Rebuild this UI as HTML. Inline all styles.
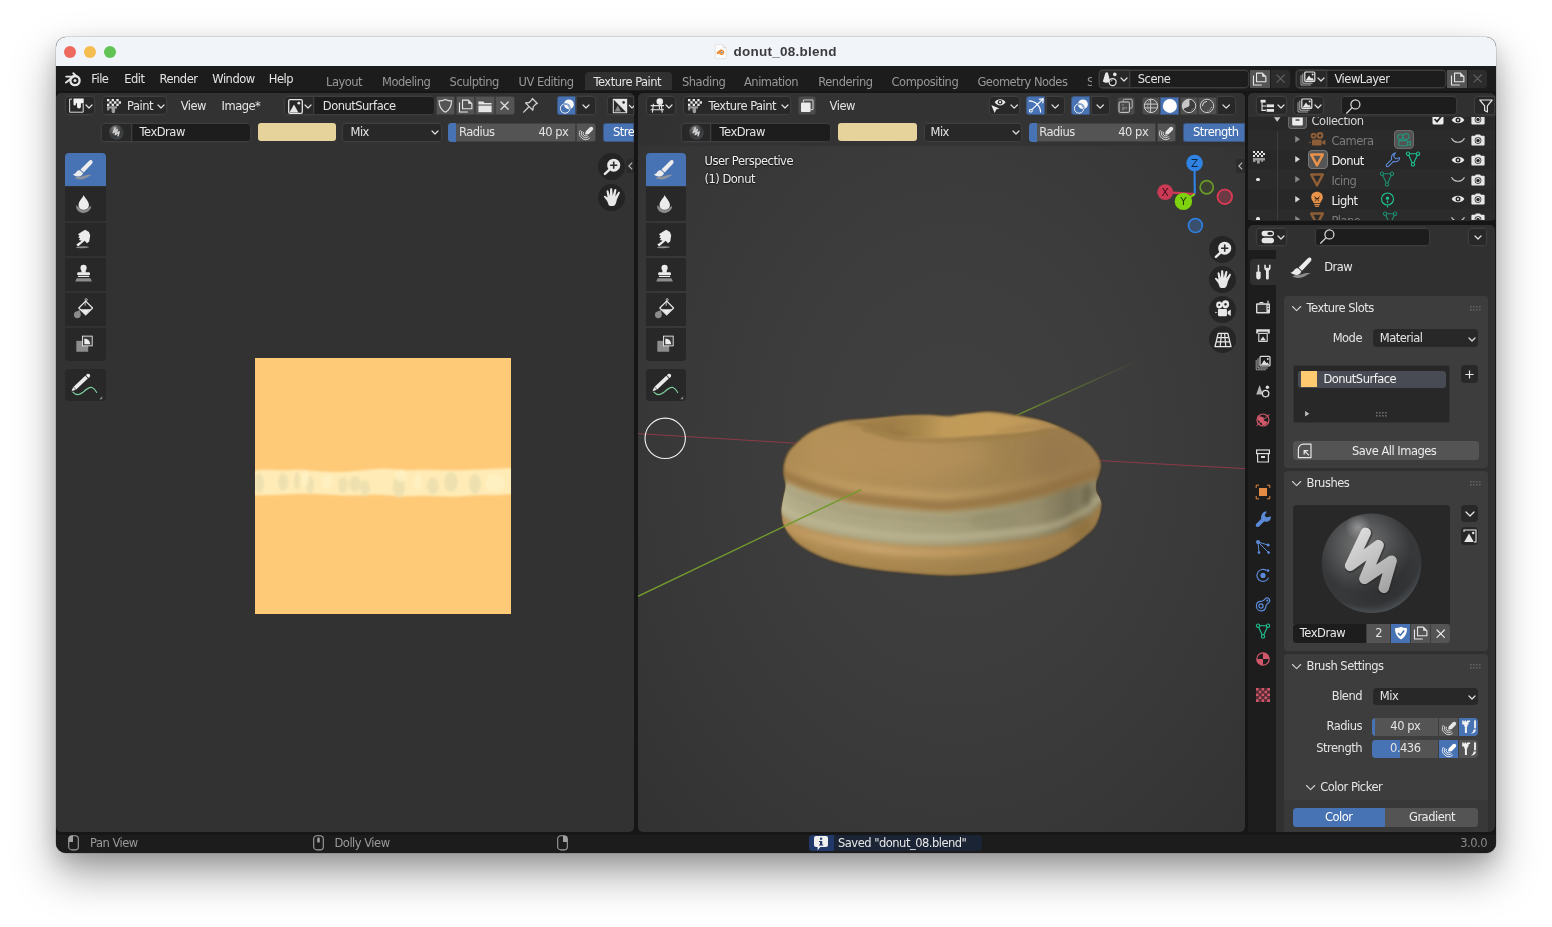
<!DOCTYPE html>
<html lang="en"><head><meta charset="utf-8"><title>donut_08.blend</title>
<style>
*{box-sizing:border-box;margin:0;padding:0}
html,body{width:1552px;height:927px;overflow:hidden;background:#fff}
body{font-family:"DejaVu Sans","Liberation Sans",sans-serif;font-size:11.5px;letter-spacing:-.5px;color:#e4e4e4;position:relative;-webkit-font-smoothing:antialiased}
#win{position:absolute;left:56px;top:37px;width:1440px;height:816px;border-radius:10px;overflow:hidden;background:#161616;
 box-shadow:0 0 0 0.5px rgba(0,0,0,.2),0 21px 44px rgba(0,0,0,.36),0 8px 20px rgba(0,0,0,.13)}
#o{position:absolute;left:-56px;top:-37px;width:1552px;height:927px;will-change:transform}
.a{position:absolute}
.t{position:absolute;white-space:nowrap;line-height:14px;height:14px}
.dim{color:#989898}
.ed{position:absolute;border-radius:5px;overflow:hidden}
.btn{position:absolute;border-radius:3.5px;background:#545454}
.menu{position:absolute;border-radius:4px;background:#282828;box-shadow:inset 0 0 0 .9px #3f3f3f,0 0 0 .4px #3a3a3a}
.fld{position:absolute;border-radius:4px;background:#1d1d1d;box-shadow:inset 0 0 0 .9px #3d3d3d,0 0 0 .4px #393939}
.pm{box-shadow:none}
.blue{background:#4772b3}
.ho{box-shadow:inset 0 0 0 .8px #3b3b3b}
.blue.ho{box-shadow:inset 0 0 0 .8px #3d4f70}
svg{position:absolute;overflow:visible}
.pnl{position:absolute;left:1284px;width:204px;background:#3d3d3d;border-radius:4px}
</style></head>
<body>
<div id="win"><div id="o">
<div class="a" style="left:56px;top:37px;width:1440px;height:29px;background:#f1f4f8;border-bottom:0"></div>
<div class="a" style="left:64px;top:46px;width:12px;height:12px;background:#ee6a5f;border-radius:50%"></div>
<div class="a" style="left:84px;top:46px;width:12px;height:12px;background:#f5bd4f;border-radius:50%"></div>
<div class="a" style="left:104px;top:46px;width:12px;height:12px;background:#61c454;border-radius:50%"></div>
<svg style="left:715px;top:44px;" width="12" height="15" viewBox="0 0 12 15">
      <path d="M0.8 0.5 H8 L11.2 3.7 V14 a.6 .6 0 0 1 -.6 .6 H0.8 a.6 .6 0 0 1 -.6 -.6 V1.1 a.6 .6 0 0 1 .6 -.6z" fill="#fbfbfb" stroke="#d8d8d8" stroke-width=".6"/>
      <path d="M8 0.5 V3.7 H11.2" fill="#e9e9e9" stroke="#d0d0d0" stroke-width=".5"/>
      <circle cx="6.6" cy="8.3" r="2.6" fill="#ea8a2e"/><circle cx="6.8" cy="8.3" r="1.15" fill="#fff"/><circle cx="6.8" cy="8.3" r=".7" fill="#2c5ea8"/>
      <path d="M1.6 8.2 L6 5.2 L7 6 L3.4 8.6 L5 8.8 L2.2 10.6z" fill="#ea8a2e"/></svg>
<div class="t" style="left:733.5px;top:43.7px;height:16px;line-height:16px;font:bold 13.5px 'Liberation Sans',sans-serif;letter-spacing:.25px;color:#3c3c40">donut_08.blend</div>
<div class="a" style="left:56px;top:66px;width:1440px;height:25px;background:#1c1c1c"></div>
<svg style="left:65px;top:71.5px;" width="17" height="15" viewBox="0 0 17 15">
      <circle cx="10" cy="8.6" r="4.6" fill="none" stroke="#e6e6e6" stroke-width="2.3"/>
      <circle cx="10" cy="8.6" r="1.5" fill="#e6e6e6"/>
      <path d="M8.3 1.2 L11.6 4.4 M1.2 4.6 H9 M1 10.6 L7.4 5.4" fill="none" stroke="#e6e6e6" stroke-width="1.9" stroke-linecap="round"/></svg>
<div class="t " style="left:91.2px;top:71.7px;">File</div>
<div class="t " style="left:124.3px;top:71.7px;">Edit</div>
<div class="t " style="left:159.5px;top:71.7px;">Render</div>
<div class="t " style="left:212.3px;top:71.7px;">Window</div>
<div class="t " style="left:268.8px;top:71.7px;">Help</div>
<div class="a" style="left:584.5px;top:72px;width:87.0px;height:18px;background:#303030;border-radius:4px 4px 0 0"></div>
<div class="t dim" style="left:326px;top:74.6px;">Layout</div>
<div class="t dim" style="left:382.1px;top:74.6px;">Modeling</div>
<div class="t dim" style="left:449.6px;top:74.6px;">Sculpting</div>
<div class="t dim" style="left:518.5px;top:74.6px;">UV Editing</div>
<div class="t " style="left:593.4px;top:74.6px;">Texture Paint</div>
<div class="t dim" style="left:682px;top:74.6px;">Shading</div>
<div class="t dim" style="left:744px;top:74.6px;">Animation</div>
<div class="t dim" style="left:818.3px;top:74.6px;">Rendering</div>
<div class="t dim" style="left:891.6px;top:74.6px;">Compositing</div>
<div class="t dim" style="left:977.4px;top:74.6px;">Geometry Nodes</div>
<div class="a" style="left:1087px;top:70px;width:4.5px;height:22px;overflow:hidden"><div class="t dim" style="left:0;top:4.6px">Scripting</div></div>
<div class="fld" style="left:1098.5px;top:69.5px;width:150.0px;height:18.5px;"></div>
<div class="menu" style="left:1098.5px;top:69.5px;width:31.5px;height:18.5px;border-radius:3.5px 0 0 3.5px"></div>
<svg style="left:1102.4px;top:70.6px;" width="17" height="17" viewBox="0 0 17 17">
      <path d="M4.4 1.4 C5.4 1.2 5.8 1.8 6.2 2.8 L8.2 10.6 C6.6 12.2 2.8 12 .8 10.4 L3.2 2.6 C3.4 1.8 3.8 1.5 4.4 1.4z" fill="#e6e6e6"/>
      <circle cx="10.6" cy="11" r="3.5" fill="#1b1b1b" stroke="#e6e6e6" stroke-width="1.25"/>
      <path d="M8.8 10.6 A2 2 0 0 1 10.6 9" fill="none" stroke="#e6e6e6" stroke-width=".8"/>
      <circle cx="12.8" cy="3.4" r="1.8" fill="#e6e6e6"/></svg>
<svg style="left:1120.5px;top:78.0px;" width="6" height="3.0" viewBox="0 0 6 3.0"><path d="M0 0 L3.0 3.0 L6 0" fill="none" stroke="#e0e0e0" stroke-width="1.2" stroke-linecap="round" stroke-linejoin="round"/></svg>
<div class="t " style="left:1137.8px;top:71.9px;">Scene</div>
<div class="btn" style="left:1249.5px;top:69.5px;width:20.5px;height:18.5px;border-radius:0"></div>
<div class="btn" style="left:1270.5px;top:69.5px;width:19.5px;height:18.5px;border-radius:0 3.5px 3.5px 0;background:#2c2c2c"></div>
<svg style="left:1252.3px;top:71.7px;" width="14.8" height="13.9" viewBox="0 0 16 15"><path d="M4.9 1.2 H11.2 L15 5 V10.6 H4.9z" fill="none" stroke="#e6e6e6" stroke-width="1.2" stroke-linejoin="round"/>
      <path d="M11 1 L15.2 5.2 H11z" fill="#e6e6e6"/>
      <path d="M1.6 3.8 V14 H10.6" fill="none" stroke="#e6e6e6" stroke-width="1.2" stroke-linejoin="round"/></svg>
<svg style="left:1276.6000000000001px;top:75.10000000000001px;" width="7.2" height="7.2" viewBox="0 0 7.2 7.2"><path d="M0 0 L7.2 7.2 M7.2 0 L0 7.2" stroke="#5e5e5e" stroke-width="1.2" stroke-linecap="round" fill="none"/></svg>
<div class="fld" style="left:1295.7px;top:69.5px;width:150.8px;height:18.5px;"></div>
<div class="menu" style="left:1295.7px;top:69.5px;width:31.8px;height:18.5px;border-radius:3.5px 0 0 3.5px"></div>
<svg style="left:1300px;top:71.2px;" width="16" height="15" viewBox="0 0 16 15"><path d="M1 4.2 V14 H11" fill="none" stroke="#e6e6e6" stroke-width=".9" opacity=".7"/>
      <path d="M2.8 2.6 V12.2 H12.6" fill="none" stroke="#e6e6e6" stroke-width=".9" opacity=".85"/>
      <rect x="4.8" y="1" width="10" height="9.4" rx="1" fill="none" stroke="#e6e6e6" stroke-width="1.2"/>
      <path d="M5.6 9.6 L9 4.4 L11.2 7.6 L12.2 6.6 L14.2 9.6z" fill="#e6e6e6"/><circle cx="12.6" cy="3.6" r="1" fill="#e6e6e6"/></svg>
<svg style="left:1318.0px;top:78.0px;" width="6" height="3.0" viewBox="0 0 6 3.0"><path d="M0 0 L3.0 3.0 L6 0" fill="none" stroke="#e0e0e0" stroke-width="1.2" stroke-linecap="round" stroke-linejoin="round"/></svg>
<div class="t " style="left:1334.5px;top:71.9px;">ViewLayer</div>
<div class="btn" style="left:1447px;top:69.5px;width:20px;height:18.5px;border-radius:0"></div>
<div class="btn" style="left:1467.5px;top:69.5px;width:19.5px;height:18.5px;border-radius:0 3.5px 3.5px 0;background:#2c2c2c"></div>
<svg style="left:1449.6px;top:71.7px;" width="14.8" height="13.9" viewBox="0 0 16 15"><path d="M4.9 1.2 H11.2 L15 5 V10.6 H4.9z" fill="none" stroke="#e6e6e6" stroke-width="1.2" stroke-linejoin="round"/>
      <path d="M11 1 L15.2 5.2 H11z" fill="#e6e6e6"/>
      <path d="M1.6 3.8 V14 H10.6" fill="none" stroke="#e6e6e6" stroke-width="1.2" stroke-linejoin="round"/></svg>
<svg style="left:1473.6000000000001px;top:75.10000000000001px;" width="7.2" height="7.2" viewBox="0 0 7.2 7.2"><path d="M0 0 L7.2 7.2 M7.2 0 L0 7.2" stroke="#5e5e5e" stroke-width="1.2" stroke-linecap="round" fill="none"/></svg>
<div class="a" style="left:56px;top:834.6px;width:1440px;height:18.4px;background:#1c1c1c"></div>
<svg style="left:68px;top:835px;" width="11" height="16" viewBox="0 0 11 16"><rect x=".7" y=".7" width="9.6" height="14.2" rx="3.2" fill="none" stroke="#a0a0a0" stroke-width="1.1"/><path d="M.7 7 V3.9 a3.2 3.2 0 0 1 3.2 -3.2 H5 V7z" fill="#a0a0a0"/></svg>
<div class="t " style="left:90px;top:836.1px;color:#9a9a9a">Pan View</div>
<svg style="left:312.5px;top:835px;" width="11" height="16" viewBox="0 0 11 16"><rect x=".7" y=".7" width="9.6" height="14.2" rx="3.2" fill="none" stroke="#a0a0a0" stroke-width="1.1"/><rect x="4.2" y="2.6" width="2.6" height="5" rx="1.2" fill="#a0a0a0"/></svg>
<div class="t " style="left:334.5px;top:836.1px;color:#9a9a9a">Dolly View</div>
<svg style="left:557px;top:835px;" width="11" height="16" viewBox="0 0 11 16"><rect x=".7" y=".7" width="9.6" height="14.2" rx="3.2" fill="none" stroke="#a0a0a0" stroke-width="1.1"/><path d="M10.3 7 V3.9 a3.2 3.2 0 0 0 -3.2 -3.2 H6 V7z" fill="#a0a0a0"/></svg>
<div class="a" style="left:809.2px;top:834.8px;width:172.8px;height:16.0px;background:#1b2434;border-radius:3.5px;overflow:hidden"><div class="a" style="left:0;top:0;width:24.6px;height:100%;background:#213869"></div></div>
<svg style="left:814.4px;top:836.2px;" width="14" height="15" viewBox="0 0 14 15"><path d="M2 0 H12 a2 2 0 0 1 2 2 V9 a2 2 0 0 1 -2 2 H6.4 L3.6 14.2 V11 H2 a2 2 0 0 1 -2 -2 V2 a2 2 0 0 1 2 -2z" fill="#f0f0f0"/>
      <rect x="6" y="1.7" width="2.2" height="2" fill="#213869"/><path d="M5 4.9 H8.2 V8.4 H9.2 V9.6 H5 V8.4 H6 V6.1 H5z" fill="#213869"/></svg>
<div class="t " style="left:838px;top:836.1px;color:#e8e8e8">Saved "donut_08.blend"</div>
<div class="t " style="right:65px;top:836.3px;color:#8a8a8a">3.0.0</div>
<div class="ed" style="left:56px;top:93px;width:578px;height:739px;background:#323232;border-radius:5px"></div>
<div class="menu" style="left:65px;top:96.2px;width:30.3px;height:19.0px;"></div>
<svg style="left:64.6px;top:96.25px;" width="22" height="19" viewBox="0 0 22 19"><path d="M7 3.1 H4.64 V16.2 H18.2 V7.6" fill="none" stroke="#dcdcdc" stroke-width="1"/>
       <path d="M8.5 2.6 H18.7 V7.3 H15.9 V10.6 a1.95 1.95 0 0 1 -3.9 0 V7.3 H10.9 V8.2 a1.2 1.2 0 0 1 -2.4 0z" fill="#f2f2f2"/></svg>
<svg style="left:85.8px;top:105.1px;" width="6" height="3.0" viewBox="0 0 6 3.0"><path d="M0 0 L3.0 3.0 L6 0" fill="none" stroke="#e0e0e0" stroke-width="1.2" stroke-linecap="round" stroke-linejoin="round"/></svg>
<div class="menu" style="left:101.7px;top:96.2px;width:65.8px;height:19.0px;"></div>
<svg style="left:107.2px;top:99px;" width="14" height="14" viewBox="0 0 14 14"><rect x="0.00" y="0.00" width="2.33" height="2.33" fill="#ececec"/><rect x="4.66" y="0.00" width="2.33" height="2.33" fill="#ececec"/><rect x="9.32" y="0.00" width="2.33" height="2.33" fill="#ececec"/><rect x="2.33" y="2.33" width="2.33" height="2.33" fill="#ececec"/><rect x="6.99" y="2.33" width="2.33" height="2.33" fill="#ececec"/><rect x="11.65" y="2.33" width="2.33" height="2.33" fill="#ececec"/><rect x="0.00" y="4.66" width="2.33" height="2.33" fill="#ececec"/><rect x="4.66" y="4.66" width="2.33" height="2.33" fill="#ececec"/><rect x="9.32" y="4.66" width="2.33" height="2.33" fill="#ececec"/><path d="M0 7.3 H10 V9.6 H8.1 V12.4 a1.75 1.75 0 0 1 -3.5 0 V9.6 H2.3 V10.6 a1.15 1.15 0 0 1 -2.3 0z" fill="#9c9c9c"/></svg>
<div class="t " style="left:127px;top:99.3px;">Paint</div>
<svg style="left:158.3px;top:105.3px;" width="6" height="3.0" viewBox="0 0 6 3.0"><path d="M0 0 L3.0 3.0 L6 0" fill="none" stroke="#e0e0e0" stroke-width="1.2" stroke-linecap="round" stroke-linejoin="round"/></svg>
<div class="t " style="left:180.7px;top:99.3px;">View</div>
<div class="t " style="left:221.6px;top:99.3px;">Image*</div>
<div class="fld" style="left:284px;top:96.2px;width:151px;height:19.0px;"></div>
<div class="menu" style="left:284px;top:96.2px;width:30.3px;height:19.0px;border-radius:3.5px 0 0 3.5px"></div>
<svg style="left:287.5px;top:98.5px;" width="15" height="15" viewBox="0 0 15 15"><rect x=".7" y=".7" width="13.6" height="13.6" rx="1.4" fill="none" stroke="#e6e6e6" stroke-width="1.3"/><path d="M1.4 13.6 L6 5.6 L10.4 13.6z" fill="#e6e6e6"/><circle cx="10.8" cy="4.2" r="1.4" fill="#e6e6e6"/></svg>
<svg style="left:305.4px;top:105.3px;" width="6" height="3.0" viewBox="0 0 6 3.0"><path d="M0 0 L3.0 3.0 L6 0" fill="none" stroke="#e0e0e0" stroke-width="1.2" stroke-linecap="round" stroke-linejoin="round"/></svg>
<div class="t " style="left:322.8px;top:99.3px;">DonutSurface</div>
<div class="btn ho" style="left:435.5px;top:96.2px;width:19.9px;height:19.0px;border-radius:0"></div>
<div class="btn ho" style="left:455.9px;top:96.2px;width:18.7px;height:19.0px;border-radius:0"></div>
<div class="btn ho" style="left:475.1px;top:96.2px;width:19.5px;height:19.0px;border-radius:0"></div>
<div class="btn ho" style="left:495.1px;top:96.2px;width:19.9px;height:19.0px;border-radius:0 3.5px 3.5px 0"></div>
<svg style="left:438.2px;top:98.4px;" width="14.6" height="15.4" viewBox="0 0 14 14"><path d="M7 1 C9 2 11 2.4 13 2.4 C13 7.6 11 11 7 13.2 C3 11 1 7.6 1 2.4 C3 2.4 5 2 7 1z" fill="none" stroke="#dcdcdc" stroke-width="1.1"/></svg>
<svg style="left:457.90000000000003px;top:98.8px;" width="14.8" height="13.9" viewBox="0 0 16 15"><path d="M4.9 1.2 H11.2 L15 5 V10.6 H4.9z" fill="none" stroke="#e6e6e6" stroke-width="1.2" stroke-linejoin="round"/>
      <path d="M11 1 L15.2 5.2 H11z" fill="#e6e6e6"/>
      <path d="M1.6 3.8 V14 H10.6" fill="none" stroke="#e6e6e6" stroke-width="1.2" stroke-linejoin="round"/></svg>
<svg style="left:478px;top:99.5px;" width="14" height="13" viewBox="0 0 14 13"><path d="M.4 1.6 H5.4 L6.6 3 H13.6 V4.6 H.4z" fill="#e6e6e6"/><rect x=".4" y="5.6" width="13.2" height="6.6" fill="#e6e6e6"/></svg>
<svg style="left:501.4px;top:102.4px;" width="7.2" height="7.2" viewBox="0 0 7.2 7.2"><path d="M0 0 L7.2 7.2 M7.2 0 L0 7.2" stroke="#e0e0e0" stroke-width="1.3" stroke-linecap="round" fill="none"/></svg>
<svg style="left:522.2px;top:97.2px;" width="16.8" height="16.8" viewBox="0 0 14 14"><path d="M8.6 1.2 L12.8 5.4 L11.4 6 L9.4 8 L9 11 L6 8 L3 5 L6 4.6 L8 2.6z" fill="none" stroke="#cfcfcf" stroke-width="1.1" stroke-linejoin="round"/><path d="M5.6 8.4 L1.4 12.6" stroke="#cfcfcf" stroke-width="1.1" stroke-linecap="round"/></svg>
<div class="btn blue ho" style="left:557.4px;top:96.2px;width:18.4px;height:19.0px;border-radius:3.5px 0 0 3.5px"></div>
<div class="menu" style="left:576.3px;top:96.2px;width:19.7px;height:19.0px;border-radius:0 3.5px 3.5px 0"></div>
<svg style="left:557.8px;top:96.5px;" width="18" height="18" viewBox="0 0 18 18"><defs><clipPath id="ov566"><circle cx="10.9" cy="7.3" r="4.9"/></clipPath></defs>
      <circle cx="7.1" cy="11.5" r="4.7" fill="none" stroke="#f4f4f4" stroke-width="1"/>
      <circle cx="10.9" cy="7.3" r="4.9" fill="#f8f8f8"/>
      <g clip-path="url(#ov566)"><circle cx="7.1" cy="11.5" r="4.7" fill="none" stroke="#4772b3" stroke-width="1.7"/><circle cx="7.1" cy="11.5" r="4.7" fill="none" stroke="#f8f8f8" stroke-width=".55"/></g></svg>
<svg style="left:583.0px;top:105.3px;" width="6" height="3.0" viewBox="0 0 6 3.0"><path d="M0 0 L3.0 3.0 L6 0" fill="none" stroke="#e0e0e0" stroke-width="1.2" stroke-linecap="round" stroke-linejoin="round"/></svg>
<div class="menu" style="left:607px;top:96.2px;width:27px;height:19.0px;border-radius:3.5px 0 0 3.5px"></div>
<svg style="left:611.5px;top:98px;" width="16" height="16" viewBox="0 0 16 16"><rect x=".8" y=".8" width="14.4" height="14.4" fill="#e6e6e6"/><path d="M1.8 1.8 L14.2 14.2 H1.8z" fill="#2a2a2a"/><path d="M2.6 13.4 L5.8 7.6 L9 13.4z" fill="#8a8a8a"/><circle cx="11.6" cy="4.4" r="1.3" fill="#2a2a2a"/></svg>
<div class="a" style="left:628px;top:100px;width:6px;height:12px;overflow:hidden"><svg style="left:0.5px;top:4.5px;" width="6" height="3" viewBox="0 0 6 3"><path d="M0 0 L3 3 L6 0" fill="none" stroke="#e0e0e0" stroke-width="1.2"/></svg></div>
<div class="fld" style="left:101px;top:122.5px;width:150px;height:19.0px;"></div>
<div class="menu" style="left:101px;top:122.5px;width:30.5px;height:19.0px;border-radius:3.5px 0 0 3.5px"></div>
<svg style="left:108.7px;top:124.50000000000001px;" width="14.6" height="14.6" viewBox="0 0 14.6 14.6"><defs><radialGradient id="bb116" cx=".4" cy=".32" r=".7" fx=".36" fy=".22"><stop offset="0" stop-color="#9c9c9c"/><stop offset=".25" stop-color="#626262"/><stop offset=".7" stop-color="#373839"/><stop offset=".9" stop-color="#3e4144"/><stop offset="1" stop-color="#53585c"/></radialGradient></defs>
      <circle cx="7.3" cy="7.3" r="7.3" fill="url(#bb116)"/>
      <path d="M6.46 2.86 L4.21 7.63 L8.33 4.64 L6.27 9.51 L10.21 6.90 L9.08 10.81" fill="none" stroke="#cfcfcf" stroke-width="1.55" stroke-linecap="round" stroke-linejoin="round"/></svg>
<div class="t " style="left:139.5px;top:125.19999999999999px;">TexDraw</div>
<div class="a" style="left:258.3px;top:123.0px;width:77.9px;height:18.2px;background:#e6d29b;border-radius:3px"></div>
<div class="menu" style="left:342.4px;top:122.5px;width:99.6px;height:19.0px;"></div>
<div class="t " style="left:350.5px;top:125.19999999999999px;">Mix</div>
<svg style="left:432.4px;top:131.1px;" width="6" height="3.0" viewBox="0 0 6 3.0"><path d="M0 0 L3.0 3.0 L6 0" fill="none" stroke="#e0e0e0" stroke-width="1.2" stroke-linecap="round" stroke-linejoin="round"/></svg>
<div class="btn ho" style="left:448.4px;top:122.5px;width:127.4px;height:19.0px;border-radius:3.5px 0 0 3.5px;overflow:hidden"><div class="a blue" style="left:0;top:0;width:8px;height:100%"></div></div>
<div class="t " style="left:459px;top:125.19999999999999px;">Radius</div>
<div class="t " style="right:983.6px;top:125.19999999999999px;">40 px</div>
<div class="btn ho" style="left:576.3px;top:122.5px;width:19.7px;height:19.0px;border-radius:0 3.5px 3.5px 0"></div>
<svg style="left:578px;top:124px;" width="16" height="16" viewBox="0 0 16 16"><path d="M5.47 7.96 A2.6 2.6 0 0 0 9.44 11.23 M3.93 7.03 A4.4 4.4 0 0 0 10.64 12.57 M2.39 6.11 A6.2 6.2 0 0 0 11.85 13.91" fill="none" stroke="#e6e6e6" stroke-width=".95" opacity=".9"/>
      <path d="M7 10.4 L7.7 7.4 L11.6 3.4 C12.5 2.5 13.8 2.5 14.6 3.3 C15.4 4.1 15.4 5.4 14.5 6.3 L10.6 10.2z" fill="#e6e6e6"/></svg>
<div class="btn blue ho" style="left:602.7px;top:122.5px;width:31.3px;height:19.0px;border-radius:3.5px 0 0 3.5px;overflow:hidden"><div class="t" style="left:10.3px;top:2.7px;color:#fff">Strength</div></div>
<div class="a" style="left:65px;top:152.8px;width:40.5px;height:33.3px;background:#4772b3;border-radius:4px 4px 0 0"></div>
<div class="a" style="left:65px;top:186.8px;width:40.5px;height:34.3px;background:#282828;border-radius:0"></div>
<div class="a" style="left:65px;top:222.8px;width:40.5px;height:33.3px;background:#282828;border-radius:0"></div>
<div class="a" style="left:65px;top:257.8px;width:40.5px;height:33.3px;background:#282828;border-radius:0"></div>
<div class="a" style="left:65px;top:292.8px;width:40.5px;height:33.3px;background:#282828;border-radius:0"></div>
<div class="a" style="left:65px;top:327.8px;width:40.5px;height:33.3px;background:#282828;border-radius:0 0 4px 4px"></div>
<div class="a" style="left:65px;top:368.7px;width:40.5px;height:32.1px;background:#282828;border-radius:4px"></div>
<svg style="left:65px;top:153px" width="40.5" height="34" viewBox="46.5 40 324.0 272">
      <path d="M122 240 C150 224 176 233 200 222 C224 211 244 213 260 216 C242 223 226 236 200 246 C170 257 146 250 122 240z" fill="#8f949c"/>
      <path d="M262 100 C270 106 268 118 262 126 L196 196 L170 172 L238 104 C246 96 256 95 262 100z" fill="#ececec"/>
      <path d="M166 178 L190 200 C188 222 162 233 136 226 C126 223 116 217 109 212 C124 208 132 200 138 190 C144 180 156 175 166 178z" fill="#ececec"/></svg>
<svg style="left:65px;top:188px" width="40.5" height="34" viewBox="46.5 320 324.0 272">
      <path d="M136 458 C132 496 162 520 194 519 C226 518 256 496 256 462 C250 468 240 472 232 474 L160 474 C150 470 142 464 136 458z" fill="#8c8c8c"/>
      <path d="M196 376 C206 402 238 426 238 456 C238 480 219 494 196 494 C173 494 155 480 155 456 C155 426 186 402 196 376z" fill="#ececec" stroke="#282828" stroke-width="7" paint-order="stroke"/></svg>
<svg style="left:65px;top:223px" width="40.5" height="34" viewBox="46.5 600 324.0 272">
      <ellipse cx="186" cy="794" rx="52" ry="7.5" fill="#8c8c8c" transform="rotate(-2 186 794)"/>
      <path d="M137 772 L151 788 L204 742 L222 762 L240 748 L248 700 L238 672 L208 654 L184 668 L150 690 L163 702 L152 713 L167 722 L158 735 L180 741 Z" fill="#ececec"/></svg>
<svg style="left:65px;top:258px" width="40.5" height="34" viewBox="46.5 32 324.0 272">
      <circle cx="195" cy="111" r="25" fill="#ececec"/><path d="M180 128 H210 L214 150 H176z" fill="#ececec"/>
      <rect x="144" y="146" width="102" height="24" rx="9" fill="#ececec"/>
      <rect x="150" y="176" width="90" height="8" fill="#ececec"/>
      <path d="M140 194 H250 L262 219 H128z" fill="#8c8c8c"/></svg>
<svg style="left:65px;top:293px" width="40.5" height="34" viewBox="46.5 312 324.0 272">
      <path d="M212 377 L267 432 L212 487 L157 432z" fill="#282828" stroke="#ececec" stroke-width="9.5" stroke-linejoin="round"/>
      <path d="M170 441 H254 L212 483z" fill="#ececec"/>
      <circle cx="145" cy="486" r="27" fill="#8c8c8c"/><path d="M166 447 L172 490 L124 468z" fill="#8c8c8c"/>
      <circle cx="216" cy="366" r="9" fill="none" stroke="#ececec" stroke-width="6"/>
      <path d="M208 378 V414" stroke="#ececec" stroke-width="6"/></svg>
<svg style="left:65px;top:328px" width="40.5" height="34" viewBox="46.5 592 324.0 272">
      <rect x="137" y="695" width="95" height="87" fill="#8c8c8c"/>
      <rect x="186" y="657" width="78" height="78" fill="#383838" stroke="#ececec" stroke-width="7"/>
      <path d="M201 722 V675 A47 47 0 0 1 248 722z" fill="#ececec"/></svg>
<svg style="left:65px;top:368.7px" width="40.5" height="32.1" viewBox="46.5 629.6 324 256.8">
      <path d="M110 814 C130 836 160 842 190 816 C215 793 240 770 262 778 C280 785 292 800 300 817" fill="none" stroke="#7fd0a0" stroke-width="9" stroke-linecap="round"/>
      <path d="M136.1 793.1 L115.7 771.1 L208.8 684.6 L229.2 706.6z" fill="#ececec"/>
      <path d="M213.8 679.9 L222 671 C228 665 238 666 243 672 C249 678 250 687 244 693 L234.2 701.9z" fill="#ececec"/>
      <path d="M112.5 774 L133 796 L98 808z" fill="#ececec"/>
      <path d="M344 848 V872 H320z" fill="#8a8a8a"/></svg>
<div class="a" style="left:598.1px;top:152.5px;width:27.0px;height:27.0px;background:rgba(30,30,30,.72);border-radius:50%"></div><svg style="left:601.6px;top:156px;" width="20" height="20" viewBox="0 0 20 20"><circle cx="11.7" cy="9.2" r="6.5" fill="#e8e8e8"/><path d="M7.2 13.9 L2.9 17.9" stroke="#e8e8e8" stroke-width="2.5" stroke-linecap="round"/>
   <path d="M11.7 5.6 V12.8 M8.1 9.2 H15.3" stroke="#2a2a2a" stroke-width="1.6"/></svg>
<div class="a" style="left:598.1px;top:183.5px;width:27.0px;height:27.0px;background:rgba(30,30,30,.72);border-radius:50%"></div><svg style="left:601.6px;top:187px;" width="20" height="20" viewBox="0 0 20 20"><g transform="translate(10 10.6) scale(1.18) translate(-9.2 -9.6)"><path d="M4.6 11.8 L2.6 9.4 C2 8.6 2.6 7.8 3.6 8.2 L5.4 9.6 L4.6 4.4 C4.5 3.3 6 3 6.3 4.2 L7.4 8.2 L7.6 2.6 C7.6 1.4 9.3 1.4 9.4 2.6 L9.8 8 L11.2 3 C11.5 1.9 13.1 2.3 12.9 3.4 L12 8.6 L14.4 5 C15 4.1 16.3 4.9 15.8 5.9 L13.4 11 C12.8 13.4 12.6 14.6 11.6 16 C10 17 8 17 6.4 16 C6 14.6 5.6 13.4 4.6 11.8z" fill="#e8e8e8"/></g></svg>
<div class="a" style="left:626px;top:158.5px;width:8px;height:14.0px;background:rgba(38,38,38,.6);border-radius:3px 0 0 3px"></div>
<svg style="left:627.5px;top:161.5px;" width="5" height="8" viewBox="0 0 5 8"><path d="M4.2 .6 L.8 4 L4.2 7.4" fill="none" stroke="#bdbdbd" stroke-width="1.1"/></svg>
<svg style="left:255.1px;top:358px;overflow:hidden" width="256.4" height="256" viewBox="0 0 256.4 256">
      <defs><filter id="bl1" x="-5%" y="-30%" width="110%" height="160%"><feGaussianBlur stdDeviation="1.1"/></filter>
      <filter id="bl2" x="-50%" y="-50%" width="200%" height="200%"><feGaussianBlur stdDeviation="1.2"/></filter></defs>
      <rect width="257" height="256" fill="#ffca78"/>
      <g filter="url(#bl1)"><path d="M-2 113 C10 110 22 113 36 112 S60 114 80 114 S104 112 122 111 S140 113 160 112 S190 113 210 112 S240 111 258 110 V136 C240 138 226 136 210 138 S180 137 160 138 S130 136 110 137 S80 137 60 136 S20 138 -2 137z" fill="#ffebb6"/></g>
      <g filter="url(#bl2)" fill="#ebdfae" opacity=".8">
        <ellipse cx="4" cy="125" rx="5" ry="10"/><ellipse cx="28" cy="124" rx="5" ry="9"/><ellipse cx="42" cy="123" rx="3" ry="9"/><ellipse cx="55" cy="127" rx="4" ry="9"/>
        <ellipse cx="88" cy="127" rx="5" ry="8"/><ellipse cx="100" cy="126" rx="6" ry="8"/><ellipse cx="110" cy="130" rx="5" ry="8"/>
        <ellipse cx="144" cy="129" rx="6" ry="11"/><ellipse cx="178" cy="128" rx="6" ry="9"/><ellipse cx="196" cy="124" rx="7" ry="10"/><ellipse cx="220" cy="126" rx="6" ry="10"/></g>
      <g filter="url(#bl2)" fill="#fff3c6" opacity=".7"><ellipse cx="50" cy="121" rx="4" ry="8"/><ellipse cx="146" cy="118" rx="6" ry="6"/><ellipse cx="163" cy="124" rx="4" ry="8"/><ellipse cx="240" cy="125" rx="10" ry="9"/><ellipse cx="72" cy="124" rx="6" ry="7"/></g>
      </svg>
<div class="ed" style="left:638px;top:93px;width:607px;height:739px;background:radial-gradient(ellipse 75% 80% at 52% 48%,#404040 0%,#3d3d3d 35%,#383838 65%,#313131 100%)"></div>
<svg style="left:638px;top:93px;overflow:hidden" width="607" height="739" viewBox="0 0 607 739">
      <line x1="0" y1="340.6" x2="160" y2="350.3" stroke="#8c3a4a" stroke-width="1"/>
      <line x1="461" y1="367.6" x2="607" y2="375.6" stroke="#8c3a4a" stroke-width="1"/>
      <defs><linearGradient id="gy" gradientUnits="userSpaceOnUse" x1="372" y1="0" x2="502" y2="0"><stop offset="0" stop-color="#6f8f2e"/><stop offset="1" stop-color="#6f8f2e" stop-opacity="0"/></linearGradient></defs>
      <line x1="378" y1="322.5" x2="502" y2="266.6" stroke="url(#gy)" stroke-width="1.4"/>
      
    <defs>
      <clipPath id="dclip"><path d="M158.3 350.0 C162.4 346.3 166.8 341.4 174.0 337.8 C181.2 334.2 190.9 330.4 201.4 328.3 C211.9 326.2 226.1 326.1 237.0 325.0 C247.9 323.9 257.5 322.6 266.6 322.0 C275.7 321.4 284.6 321.5 291.8 321.6 C299.0 321.7 304.0 322.8 310.0 322.6 C316.0 322.4 320.9 321.3 328.0 320.6 C335.1 319.9 343.9 318.0 352.5 318.2 C361.1 318.4 370.7 320.3 379.8 322.0 C388.9 323.7 398.2 325.5 407.0 328.3 C415.8 331.1 425.4 335.3 432.4 338.8 C439.4 342.3 444.7 345.4 449.2 349.3 C453.8 353.2 457.4 358.3 459.7 362.0 C462.0 365.7 462.7 368.2 462.9 371.4 C463.1 374.6 461.8 378.1 461.0 381.0 C460.2 383.9 458.7 386.2 458.2 389.0 C457.7 391.8 457.3 395.0 458.0 398.0 C458.7 401.0 461.6 404.1 462.4 407.0 C463.2 409.9 463.7 411.4 462.9 415.6 C462.1 419.8 460.6 427.5 457.6 432.4 C454.6 437.3 449.9 440.8 445.0 445.0 C440.1 449.2 434.3 453.8 428.0 457.6 C421.7 461.4 415.7 464.8 407.0 468.0 C398.3 471.2 386.1 474.5 375.6 476.6 C365.1 478.7 354.6 479.8 344.0 480.8 C333.4 481.8 322.8 482.4 312.0 482.4 C301.2 482.4 291.5 481.8 279.0 480.8 C266.5 479.8 251.0 478.7 237.0 476.6 C223.0 474.5 207.2 471.9 195.0 468.0 C182.8 464.1 171.4 458.6 163.5 453.4 C155.6 448.2 151.1 442.2 147.8 436.6 C144.5 431.0 144.0 425.1 143.6 419.8 C143.2 414.5 144.7 409.6 145.4 405.0 C146.1 400.4 147.8 396.2 147.8 392.4 C147.8 388.6 146.0 385.5 145.6 382.0 C145.3 378.5 145.1 375.1 145.7 371.4 C146.4 367.7 147.4 363.6 149.5 360.0 C151.6 356.4 154.2 353.7 158.3 350.0Z"/></clipPath>
      <filter id="db05" x="-10%" y="-10%" width="120%" height="120%"><feGaussianBlur stdDeviation="0.85"/></filter>
      <filter id="db1" x="-10%" y="-30%" width="120%" height="160%"><feGaussianBlur stdDeviation="1.3"/></filter>
      <filter id="db2" x="-20%" y="-50%" width="140%" height="200%"><feGaussianBlur stdDeviation="2.4"/></filter>
      <filter id="db3" x="-20%" y="-60%" width="140%" height="220%"><feGaussianBlur stdDeviation="3"/></filter>
      <filter id="db4" x="-20%" y="-60%" width="140%" height="220%"><feGaussianBlur stdDeviation="4"/></filter>
      <filter id="db8" x="-30%" y="-80%" width="160%" height="260%"><feGaussianBlur stdDeviation="9"/></filter>
      <linearGradient id="dg" gradientUnits="userSpaceOnUse" x1="143" y1="0" x2="463" y2="0">
        <stop offset="0" stop-color="#ae8a52"/><stop offset=".12" stop-color="#b39158"/><stop offset=".4" stop-color="#af8d57"/><stop offset=".62" stop-color="#a48652"/><stop offset=".85" stop-color="#9b7d4e"/><stop offset="1" stop-color="#a28250"/></linearGradient>
      <linearGradient id="cg" gradientUnits="userSpaceOnUse" x1="143" y1="0" x2="463" y2="0">
        <stop offset="0" stop-color="#b6b08c"/><stop offset=".1" stop-color="#b0aa87"/><stop offset=".32" stop-color="#aea783"/><stop offset=".5" stop-color="#a9a27e"/><stop offset=".66" stop-color="#a09976"/><stop offset=".8" stop-color="#968e6c"/><stop offset=".9" stop-color="#7d7558"/><stop offset=".96" stop-color="#878062"/><stop offset="1" stop-color="#8e8666"/></linearGradient>
      <linearGradient id="hg" gradientUnits="userSpaceOnUse" x1="212" y1="0" x2="422" y2="0">
        <stop offset="0" stop-color="#ab894e"/><stop offset=".2" stop-color="#a07f48"/><stop offset=".33" stop-color="#a9884d"/><stop offset=".45" stop-color="#c09a59"/><stop offset=".7" stop-color="#c39c5a"/><stop offset=".9" stop-color="#b8925a"/><stop offset="1" stop-color="#ac8850"/></linearGradient>
      <linearGradient id="lh" gradientUnits="userSpaceOnUse" x1="143" y1="0" x2="463" y2="0">
        <stop offset="0" stop-color="#c9a56c" stop-opacity=".15"/><stop offset=".2" stop-color="#cfab72" stop-opacity=".75"/><stop offset=".5" stop-color="#cfab72" stop-opacity=".85"/><stop offset=".72" stop-color="#c9a56c" stop-opacity=".35"/><stop offset="1" stop-color="#c9a56c" stop-opacity=".0"/></linearGradient>
      <linearGradient id="lg" gradientUnits="userSpaceOnUse" x1="143" y1="0" x2="463" y2="0">
        <stop offset="0" stop-color="#bd965c"/><stop offset=".3" stop-color="#c9a46e"/><stop offset=".55" stop-color="#be985e"/><stop offset=".8" stop-color="#a68550"/><stop offset="1" stop-color="#987948"/></linearGradient>
    </defs>
    <g filter="url(#db05)"><path d="M158.3 350.0 C162.4 346.3 166.8 341.4 174.0 337.8 C181.2 334.2 190.9 330.4 201.4 328.3 C211.9 326.2 226.1 326.1 237.0 325.0 C247.9 323.9 257.5 322.6 266.6 322.0 C275.7 321.4 284.6 321.5 291.8 321.6 C299.0 321.7 304.0 322.8 310.0 322.6 C316.0 322.4 320.9 321.3 328.0 320.6 C335.1 319.9 343.9 318.0 352.5 318.2 C361.1 318.4 370.7 320.3 379.8 322.0 C388.9 323.7 398.2 325.5 407.0 328.3 C415.8 331.1 425.4 335.3 432.4 338.8 C439.4 342.3 444.7 345.4 449.2 349.3 C453.8 353.2 457.4 358.3 459.7 362.0 C462.0 365.7 462.7 368.2 462.9 371.4 C463.1 374.6 461.8 378.1 461.0 381.0 C460.2 383.9 458.7 386.2 458.2 389.0 C457.7 391.8 457.3 395.0 458.0 398.0 C458.7 401.0 461.6 404.1 462.4 407.0 C463.2 409.9 463.7 411.4 462.9 415.6 C462.1 419.8 460.6 427.5 457.6 432.4 C454.6 437.3 449.9 440.8 445.0 445.0 C440.1 449.2 434.3 453.8 428.0 457.6 C421.7 461.4 415.7 464.8 407.0 468.0 C398.3 471.2 386.1 474.5 375.6 476.6 C365.1 478.7 354.6 479.8 344.0 480.8 C333.4 481.8 322.8 482.4 312.0 482.4 C301.2 482.4 291.5 481.8 279.0 480.8 C266.5 479.8 251.0 478.7 237.0 476.6 C223.0 474.5 207.2 471.9 195.0 468.0 C182.8 464.1 171.4 458.6 163.5 453.4 C155.6 448.2 151.1 442.2 147.8 436.6 C144.5 431.0 144.0 425.1 143.6 419.8 C143.2 414.5 144.7 409.6 145.4 405.0 C146.1 400.4 147.8 396.2 147.8 392.4 C147.8 388.6 146.0 385.5 145.6 382.0 C145.3 378.5 145.1 375.1 145.7 371.4 C146.4 367.7 147.4 363.6 149.5 360.0 C151.6 356.4 154.2 353.7 158.3 350.0Z" fill="url(#dg)" stroke="#3c3021" stroke-width="1.5" stroke-opacity=".7"/></g>
    <g clip-path="url(#dclip)">
      <!-- broad top shading -->
      <g filter="url(#db8)">
        <ellipse cx="262" cy="362" rx="90" ry="22" fill="#b9935a" opacity=".6"/>
        <ellipse cx="427" cy="369" rx="34" ry="30" fill="#94744a" opacity=".55"/>
      </g>
      <!-- hole -->
      <g filter="url(#db1)">
        <path d="M212.0 331.0 C216.2 330.2 227.9 327.7 237.0 326.5 C246.1 325.3 257.5 324.5 266.6 324.0 C275.7 323.5 284.2 323.4 291.8 323.6 C299.4 323.8 306.8 325.2 312.0 325.0 C317.2 324.8 316.2 323.3 323.0 322.5 C329.8 321.7 343.0 320.1 352.5 320.4 C362.0 320.6 370.7 322.4 379.8 324.0 C388.9 325.6 400.0 328.2 407.0 330.0 C414.0 331.8 419.5 334.2 422.0 335.0 L410.0 335.0 C407.0 335.6 398.3 337.5 392.0 338.4 C385.7 339.3 380.0 339.9 372.0 340.6 C364.0 341.3 354.0 341.8 344.0 342.4 C334.0 343.0 322.3 344.1 312.0 344.4 C301.7 344.7 291.0 344.6 282.0 344.2 C273.0 343.8 265.0 343.2 258.0 342.0 C251.0 340.8 245.7 338.6 240.0 337.0 C234.3 335.4 226.7 333.2 224.0 332.5Z" fill="url(#hg)"/>
      </g>
      <g filter="url(#db2)">
        <path d="M208.0 328.5 C210.7 329.0 218.7 330.0 224.0 331.6 C229.3 333.2 235.0 336.2 240.0 338.0 C245.0 339.8 249.5 341.4 254.0 342.2 C258.5 343.0 264.8 342.9 267.0 343.0" fill="none" stroke="#8b6c3c" stroke-width="3.2" opacity=".6"/>
        <path d="M230.0 328.0 C233.0 328.8 242.7 331.2 248.0 333.0 C253.3 334.8 257.7 337.4 262.0 339.0 C266.3 340.6 272.0 341.9 274.0 342.5" fill="none" stroke="#93733f" stroke-width="3" opacity=".55"/>
        <path d="M358.0 339.6 C361.7 338.9 372.7 336.9 380.0 335.6 C387.3 334.3 395.3 332.3 402.0 331.6 C408.7 330.9 414.7 330.7 420.0 331.6 C425.3 332.5 431.7 336.1 434.0 337.0" fill="none" stroke="#99793f" stroke-width="2.6" opacity=".5"/>
        <path d="M365.0 330.0 C368.7 329.6 379.2 327.6 387.0 327.4 C394.8 327.2 404.5 327.7 412.0 329.0 C419.5 330.3 428.7 334.0 432.0 335.0" fill="none" stroke="#c8a15e" stroke-width="3" opacity=".6"/>
      </g>
      <g filter="url(#db1)"><path d="M224.0 335.7 C226.7 336.4 234.3 338.6 240.0 340.2 C245.7 341.8 251.0 344.0 258.0 345.2 C265.0 346.4 273.0 347.0 282.0 347.4 C291.0 347.8 301.7 347.9 312.0 347.6 C322.3 347.3 334.0 346.2 344.0 345.6 C354.0 345.0 364.0 344.5 372.0 343.8 C380.0 343.1 385.7 342.5 392.0 341.6 C398.3 340.7 407.0 338.8 410.0 338.2" fill="none" stroke="#9b7c46" stroke-width="4.5" opacity=".55"/></g>
      <!-- lip highlight + shadow -->
      <g filter="url(#db4)"><path d="M141.0 367.0 C142.1 367.7 142.3 368.9 147.8 371.4 C153.3 373.9 162.6 378.5 174.0 382.0 C185.4 385.5 201.3 389.8 216.0 392.5 C230.7 395.2 247.7 396.6 262.0 398.0 C276.3 399.4 289.5 400.8 302.0 400.9 C314.5 401.0 326.5 399.6 337.0 398.5 C347.5 397.4 355.8 396.2 365.0 394.6 C374.2 393.0 383.2 391.1 392.0 389.0 C400.8 386.9 409.4 384.5 417.7 382.0 C426.0 379.5 435.4 376.1 442.0 374.0 C448.6 371.9 453.6 370.6 457.6 369.3 C461.6 368.0 464.6 366.6 466.0 366.0 L466.0 373.0 C464.6 373.6 461.6 375.0 457.6 376.3 C453.6 377.6 448.6 378.9 442.0 381.0 C435.4 383.1 426.0 386.5 417.7 389.0 C409.4 391.5 400.8 393.9 392.0 396.0 C383.2 398.1 374.2 400.0 365.0 401.6 C355.8 403.2 347.5 404.4 337.0 405.5 C326.5 406.6 314.5 408.0 302.0 407.9 C289.5 407.8 276.3 406.4 262.0 405.0 C247.7 403.6 230.7 402.2 216.0 399.5 C201.3 396.8 185.4 392.5 174.0 389.0 C162.6 385.5 153.3 380.9 147.8 378.4 C142.3 375.9 142.1 374.7 141.0 374.0Z" fill="url(#lh)"/></g>
      <g filter="url(#db3)"><path d="M141.0 373.5 C142.1 374.2 142.3 375.4 147.8 377.9 C153.3 380.4 162.6 385.0 174.0 388.5 C185.4 392.0 201.3 396.3 216.0 399.0 C230.7 401.7 247.7 403.1 262.0 404.5 C276.3 405.9 289.5 407.3 302.0 407.4 C314.5 407.5 326.5 406.1 337.0 405.0 C347.5 403.9 355.8 402.7 365.0 401.1 C374.2 399.5 383.2 397.6 392.0 395.5 C400.8 393.4 409.4 391.0 417.7 388.5 C426.0 386.0 435.4 382.6 442.0 380.5 C448.6 378.4 453.6 377.1 457.6 375.8 C461.6 374.5 464.6 373.1 466.0 372.5 L466.0 381.5 C464.6 382.1 461.6 383.5 457.6 384.8 C453.6 386.1 448.6 387.4 442.0 389.5 C435.4 391.6 426.0 395.0 417.7 397.5 C409.4 400.0 400.8 402.4 392.0 404.5 C383.2 406.6 374.2 408.5 365.0 410.1 C355.8 411.7 347.5 412.9 337.0 414.0 C326.5 415.1 314.5 416.5 302.0 416.4 C289.5 416.3 276.3 414.9 262.0 413.5 C247.7 412.1 230.7 410.7 216.0 408.0 C201.3 405.3 185.4 401.0 174.0 397.5 C162.6 394.0 153.3 389.4 147.8 386.9 C142.3 384.4 142.1 383.2 141.0 382.5Z" fill="#8c6b3a" opacity=".62"/></g>
      <!-- cream -->
      <g filter="url(#db2)"><path d="M141.0 385.0 C142.1 385.7 142.3 386.9 147.8 389.4 C153.3 391.9 162.6 396.5 174.0 400.0 C185.4 403.5 201.3 407.8 216.0 410.5 C230.7 413.2 247.7 414.6 262.0 416.0 C276.3 417.4 289.5 418.8 302.0 418.9 C314.5 419.0 326.5 417.6 337.0 416.5 C347.5 415.4 355.8 414.2 365.0 412.6 C374.2 411.0 383.2 409.1 392.0 407.0 C400.8 404.9 409.4 402.5 417.7 400.0 C426.0 397.5 435.4 394.1 442.0 392.0 C448.6 389.9 453.6 388.6 457.6 387.3 C461.6 386.0 464.6 384.6 466.0 384.0 L466.0 411.0 C464.8 411.7 461.5 412.9 458.7 415.4 C455.9 417.9 453.1 422.9 449.0 426.0 C444.9 429.1 439.2 431.6 434.0 434.0 C428.8 436.4 424.7 438.6 417.7 440.6 C410.7 442.6 400.8 444.6 392.0 446.0 C383.2 447.4 375.0 448.0 365.0 449.0 C355.0 450.0 342.5 451.3 332.0 452.0 C321.5 452.7 313.7 453.2 302.0 453.2 C290.3 453.2 275.3 453.0 262.0 452.0 C248.7 451.0 235.3 449.2 222.0 447.0 C208.7 444.8 192.8 441.7 182.0 439.0 C171.2 436.3 162.8 433.3 157.0 431.0 C151.2 428.7 149.8 427.0 147.0 425.0 C144.2 423.0 141.2 420.0 140.0 419.0Z" fill="url(#cg)"/></g>
      <g filter="url(#db2)">
        <path d="M141.0 393.0 C142.1 393.7 142.3 394.9 147.8 397.4 C153.3 399.9 162.6 404.5 174.0 408.0 C185.4 411.5 201.3 415.8 216.0 418.5 C230.7 421.2 247.7 422.6 262.0 424.0 C276.3 425.4 289.5 426.8 302.0 426.9 C314.5 427.0 326.5 425.6 337.0 424.5 C347.5 423.4 355.8 422.2 365.0 420.6 C374.2 419.0 383.2 417.1 392.0 415.0 C400.8 412.9 409.4 410.5 417.7 408.0 C426.0 405.5 435.4 402.1 442.0 400.0 C448.6 397.9 453.6 396.6 457.6 395.3 C461.6 394.0 464.6 392.6 466.0 392.0" fill="none" stroke="#857c5a" stroke-width="6" opacity=".18"/>
        <path d="M140.0 410.0 C141.2 411.0 144.2 414.0 147.0 416.0 C149.8 418.0 151.2 419.7 157.0 422.0 C162.8 424.3 171.2 427.3 182.0 430.0 C192.8 432.7 208.7 435.8 222.0 438.0 C235.3 440.2 248.7 442.0 262.0 443.0 C275.3 444.0 290.3 444.2 302.0 444.2 C313.7 444.2 321.5 443.7 332.0 443.0 C342.5 442.3 355.0 441.0 365.0 440.0 C375.0 439.0 383.2 438.4 392.0 437.0 C400.8 435.6 410.7 433.6 417.7 431.6 C424.7 429.6 428.8 427.4 434.0 425.0 C439.2 422.6 444.9 420.1 449.0 417.0 C453.1 413.9 455.9 408.9 458.7 406.4 C461.5 403.9 464.8 402.7 466.0 402.0" fill="none" stroke="#c4be9a" stroke-width="6" opacity=".55"/>
        <ellipse cx="357" cy="429" rx="26" ry="9" fill="#8c8462" opacity=".3"/>
        <ellipse cx="449" cy="403" rx="5" ry="12" fill="#5e563c" opacity=".45"/>
        
      </g>
      <!-- lower torus -->
      <g filter="url(#db2)"><path d="M140.0 421.0 C141.2 422.0 144.2 425.0 147.0 427.0 C149.8 429.0 151.2 430.7 157.0 433.0 C162.8 435.3 171.2 438.3 182.0 441.0 C192.8 443.7 208.7 446.8 222.0 449.0 C235.3 451.2 248.7 453.0 262.0 454.0 C275.3 455.0 290.3 455.2 302.0 455.2 C313.7 455.2 321.5 454.7 332.0 454.0 C342.5 453.3 355.0 452.0 365.0 451.0 C375.0 450.0 383.2 449.4 392.0 448.0 C400.8 446.6 410.7 444.6 417.7 442.6 C424.7 440.6 428.8 438.4 434.0 436.0 C439.2 433.6 444.9 431.1 449.0 428.0 C453.1 424.9 455.9 419.9 458.7 417.4 C461.5 414.9 464.8 413.7 466.0 413.0 L466.0 422.0 C464.8 422.7 461.5 423.9 458.7 426.4 C455.9 428.9 453.1 433.9 449.0 437.0 C444.9 440.1 439.2 442.6 434.0 445.0 C428.8 447.4 424.7 449.6 417.7 451.6 C410.7 453.6 400.8 455.6 392.0 457.0 C383.2 458.4 375.0 459.0 365.0 460.0 C355.0 461.0 342.5 462.3 332.0 463.0 C321.5 463.7 313.7 464.2 302.0 464.2 C290.3 464.2 275.3 464.0 262.0 463.0 C248.7 462.0 235.3 460.2 222.0 458.0 C208.7 455.8 192.8 452.7 182.0 450.0 C171.2 447.3 162.8 444.3 157.0 442.0 C151.2 439.7 149.8 438.0 147.0 436.0 C144.2 434.0 141.2 431.0 140.0 430.0Z" fill="url(#lg)" opacity=".95"/></g>
      <g filter="url(#db4)"><path d="M140.0 437.0 C141.2 438.0 144.2 441.0 147.0 443.0 C149.8 445.0 151.2 446.7 157.0 449.0 C162.8 451.3 171.2 454.3 182.0 457.0 C192.8 459.7 208.7 462.8 222.0 465.0 C235.3 467.2 248.7 469.0 262.0 470.0 C275.3 471.0 290.3 471.2 302.0 471.2 C313.7 471.2 321.5 470.7 332.0 470.0 C342.5 469.3 355.0 468.0 365.0 467.0 C375.0 466.0 383.2 465.4 392.0 464.0 C400.8 462.6 410.7 460.6 417.7 458.6 C424.7 456.6 428.8 454.4 434.0 452.0 C439.2 449.6 444.9 447.1 449.0 444.0 C453.1 440.9 455.9 435.9 458.7 433.4 C461.5 430.9 464.8 429.7 466.0 429.0 L466.0 451.0 C464.8 451.7 461.5 452.9 458.7 455.4 C455.9 457.9 453.1 462.9 449.0 466.0 C444.9 469.1 439.2 471.6 434.0 474.0 C428.8 476.4 424.7 478.6 417.7 480.6 C410.7 482.6 400.8 484.6 392.0 486.0 C383.2 487.4 375.0 488.0 365.0 489.0 C355.0 490.0 342.5 491.3 332.0 492.0 C321.5 492.7 313.7 493.2 302.0 493.2 C290.3 493.2 275.3 493.0 262.0 492.0 C248.7 491.0 235.3 489.2 222.0 487.0 C208.7 484.8 192.8 481.7 182.0 479.0 C171.2 476.3 162.8 473.3 157.0 471.0 C151.2 468.7 149.8 467.0 147.0 465.0 C144.2 463.0 141.2 460.0 140.0 459.0Z" fill="#9c7840" opacity=".4"/>
        <ellipse cx="444" cy="437" rx="12" ry="14" fill="#86683a" opacity=".5"/></g>
    </g>
      <line x1="0" y1="503.29999999999995" x2="223" y2="396.6" stroke="#729a2c" stroke-width="1.5"/>
      <circle cx="27.200000000000045" cy="345.3" r="20.2" fill="none" stroke="#f2f2f2" stroke-width="1.1"/>
    </svg>
<div class="a" style="left:638px;top:93px;width:607px;height:52.5px;background:rgba(48,48,48,.55);border-radius:5px 5px 0 0"></div>
<div class="menu" style="left:646.2px;top:96.2px;width:29.6px;height:19.0px;"></div>
<svg style="left:650px;top:98px;" width="16" height="16" viewBox="0 0 16 16"><path d="M.6 7.6 H14 M.6 11.8 H14 M3.4 5.8 L2.4 14.6 M11.2 5.8 L12.2 14.6" fill="none" stroke="#e6e6e6" stroke-width="1.1"/>
      <path d="M9.4 6.2 V11" stroke="#e6e6e6" stroke-width="1.1"/><circle cx="9.8" cy="3.6" r="3.3" fill="#e6e6e6"/><circle cx="8.8" cy="2.6" r="1" fill="#fff"/></svg>
<svg style="left:666.3px;top:105.3px;" width="6" height="3.0" viewBox="0 0 6 3.0"><path d="M0 0 L3.0 3.0 L6 0" fill="none" stroke="#e0e0e0" stroke-width="1.2" stroke-linecap="round" stroke-linejoin="round"/></svg>
<div class="menu" style="left:682.6px;top:96.2px;width:108.8px;height:19.0px;"></div>
<svg style="left:687.9px;top:99px;" width="14" height="14" viewBox="0 0 14 14"><rect x="0.00" y="0.00" width="2.33" height="2.33" fill="#ececec"/><rect x="4.66" y="0.00" width="2.33" height="2.33" fill="#ececec"/><rect x="9.32" y="0.00" width="2.33" height="2.33" fill="#ececec"/><rect x="2.33" y="2.33" width="2.33" height="2.33" fill="#ececec"/><rect x="6.99" y="2.33" width="2.33" height="2.33" fill="#ececec"/><rect x="11.65" y="2.33" width="2.33" height="2.33" fill="#ececec"/><rect x="0.00" y="4.66" width="2.33" height="2.33" fill="#ececec"/><rect x="4.66" y="4.66" width="2.33" height="2.33" fill="#ececec"/><rect x="9.32" y="4.66" width="2.33" height="2.33" fill="#ececec"/><path d="M0 7.3 H10 V9.6 H8.1 V12.4 a1.75 1.75 0 0 1 -3.5 0 V9.6 H2.3 V10.6 a1.15 1.15 0 0 1 -2.3 0z" fill="#9c9c9c"/></svg>
<div class="t " style="left:708.4px;top:99.3px;">Texture Paint</div>
<svg style="left:781.8px;top:105.3px;" width="6" height="3.0" viewBox="0 0 6 3.0"><path d="M0 0 L3.0 3.0 L6 0" fill="none" stroke="#e0e0e0" stroke-width="1.2" stroke-linecap="round" stroke-linejoin="round"/></svg>
<div class="btn ho" style="left:798px;top:96.2px;width:18px;height:19.0px;background:#4d4d4d"></div>
<svg style="left:800px;top:99px;" width="14" height="14" viewBox="0 0 14 14"><path d="M3.4 3.2 V1 H13 V10.6 H10.8" fill="none" stroke="#d8d8d8" stroke-width="1"/><rect x="1" y="3.4" width="9.6" height="9.6" rx="1" fill="#ececec"/></svg>
<div class="t " style="left:829.6px;top:99.3px;">View</div>
<div class="menu" style="left:989.3px;top:96.2px;width:30.5px;height:19.0px;"></div>
<svg style="left:990px;top:96.6px;" width="20" height="18" viewBox="5 0 20 18"><path d="M9.6 5.3 C12 1.2 18.2 1.2 20.6 5.3 C18.2 9.4 12 9.4 9.6 5.3z" fill="#e6e6e6"/><circle cx="15.1" cy="5.2" r="2.3" fill="#282828"/><circle cx="15.1" cy="5.2" r="1.15" fill="#e6e6e6"/>
      <path d="M6.3 8 L14.3 11.4 L11.3 12.6 L9.6 16z" fill="#e6e6e6"/></svg>
<svg style="left:1010.8px;top:105.0px;" width="6.4" height="3.2" viewBox="0 0 6.4 3.2"><path d="M0 0 L3.2 3.2 L6.4 0" fill="none" stroke="#e0e0e0" stroke-width="1.2" stroke-linecap="round" stroke-linejoin="round"/></svg>
<div class="btn blue ho" style="left:1026.2px;top:96.2px;width:18.8px;height:19.0px;border-radius:4px 0 0 4px"></div>
<svg style="left:1026.6px;top:96.6px;" width="18" height="18" viewBox="0 0 18 18"><path d="M1.9 3.8 A11.7 11.7 0 0 1 13.6 15.5" fill="none" stroke="#fff" stroke-width="1.15"/>
      <path d="M4.9 12.6 L16 2" stroke="#fff" stroke-width="1.15"/><path d="M11.8 2.3 L16.2 1.9 L15.8 6.3" fill="none" stroke="#fff" stroke-width="1.15"/>
      <circle cx="3.85" cy="13.65" r="1.4" fill="#4772b3" stroke="#fff" stroke-width="1.05"/></svg>
<div class="menu" style="left:1045.5px;top:96.2px;width:19.1px;height:19.0px;border-radius:0 4px 4px 0"></div>
<svg style="left:1051.8px;top:105.0px;" width="6.4" height="3.2" viewBox="0 0 6.4 3.2"><path d="M0 0 L3.2 3.2 L6.4 0" fill="none" stroke="#e0e0e0" stroke-width="1.2" stroke-linecap="round" stroke-linejoin="round"/></svg>
<div class="btn blue ho" style="left:1071.2px;top:96.2px;width:18.8px;height:19.0px;border-radius:4px 0 0 4px"></div>
<svg style="left:1071.7px;top:96.5px;" width="18" height="18" viewBox="0 0 18 18"><defs><clipPath id="ov1080"><circle cx="10.9" cy="7.3" r="4.9"/></clipPath></defs>
      <circle cx="7.1" cy="11.5" r="4.7" fill="none" stroke="#f4f4f4" stroke-width="1"/>
      <circle cx="10.9" cy="7.3" r="4.9" fill="#f8f8f8"/>
      <g clip-path="url(#ov1080)"><circle cx="7.1" cy="11.5" r="4.7" fill="none" stroke="#4772b3" stroke-width="1.7"/><circle cx="7.1" cy="11.5" r="4.7" fill="none" stroke="#f8f8f8" stroke-width=".55"/></g></svg>
<div class="menu" style="left:1090.5px;top:96.2px;width:19.1px;height:19.0px;border-radius:0 4px 4px 0"></div>
<svg style="left:1096.8px;top:105.0px;" width="6.4" height="3.2" viewBox="0 0 6.4 3.2"><path d="M0 0 L3.2 3.2 L6.4 0" fill="none" stroke="#e0e0e0" stroke-width="1.2" stroke-linecap="round" stroke-linejoin="round"/></svg>
<div class="btn ho" style="left:1116.6px;top:96.5px;width:18.0px;height:18.4px;background:#4a4a4a;border-radius:4px"></div>
<svg style="left:1116.9px;top:96.6px;" width="18" height="18" viewBox="0 0 18 18"><path d="M6.2 4.6 V3.4 a1.2 1.2 0 0 1 1.2 -1.2 H14 a1.2 1.2 0 0 1 1.2 1.2 V10 a1.2 1.2 0 0 1 -1.2 1.2 H12.6" fill="none" stroke="#bdbdbd" stroke-width=".95"/>
      <rect x="2" y="5" width="10.4" height="10.4" rx="1.3" fill="none" stroke="#d0d0d0" stroke-width="1"/>
      <g fill="#c4c4c4"><rect x="5.4" y="7.4" width="1.1" height="1.1"/><rect x="5.4" y="10.4" width="1.1" height="1.1"/><rect x="6.6" y="10.4" width="1.1" height="1.1"/><rect x="8.6" y="10.4" width="1.1" height="1.1"/><rect x="5.4" y="12.2" width="1.1" height=".9"/></g></svg>
<div class="btn ho" style="left:1141.5px;top:96.5px;width:18.3px;height:18.4px;border-radius:4px 0 0 4px;background:#4f4f4f"></div>
<div class="btn blue ho" style="left:1160.4px;top:96.5px;width:18.5px;height:18.4px;border-radius:0"></div>
<div class="btn ho" style="left:1179.5px;top:96.5px;width:18.1px;height:18.4px;border-radius:0;background:#4f4f4f"></div>
<div class="btn ho" style="left:1198.3px;top:96.5px;width:18.5px;height:18.4px;border-radius:0;background:#4f4f4f"></div>
<svg style="left:1141.6px;top:96.6px;" width="18" height="18" viewBox="0 0 18 18"><circle cx="9" cy="8.9" r="6.7" fill="none" stroke="#d2d2d2" stroke-width=".95"/><path d="M8.6 2.4 V15.6 M2.6 7.1 H15.4 M2.6 10.9 H15.4" stroke="#d2d2d2" stroke-width=".9"/><path d="M8.6 2.4 C4.6 5 4.6 13 8.6 15.6" fill="none" stroke="#d2d2d2" stroke-width=".7" opacity=".6"/></svg>
<svg style="left:1160.6px;top:96.6px;" width="18" height="18" viewBox="0 0 18 18"><circle cx="8.9" cy="8.9" r="7" fill="#fff"/></svg>
<svg style="left:1179.6px;top:96.6px;" width="18" height="18" viewBox="0 0 18 18"><circle cx="9" cy="8.9" r="6.7" fill="#3c3c3c" stroke="#d2d2d2" stroke-width=".95"/><path d="M9 8.9 V2.2 A6.7 6.7 0 0 0 2.9 11.6z" fill="#c6c6c6"/><path d="M9 2.2 V8.9 L2.9 11.6" fill="none" stroke="#d2d2d2" stroke-width=".8"/><path d="M11.2 13.6 L13.6 11.2 M12.8 14.2 L14.6 12.4" stroke="#d2d2d2" stroke-width=".7" opacity=".7"/></svg>
<svg style="left:1198.4px;top:96.6px;" width="18" height="18" viewBox="0 0 18 18"><circle cx="9" cy="8.9" r="6.7" fill="#4a4a4a" stroke="#d2d2d2" stroke-width=".95"/><path d="M4.6 8.6 A4.6 4.6 0 0 1 8.6 4.5" fill="none" stroke="#d2d2d2" stroke-width="1.1" stroke-linecap="round"/><path d="M13.6 10.2 A5 5 0 0 1 9.6 13.8" fill="none" stroke="#d2d2d2" stroke-width="1.2" stroke-dasharray=".8 .9" opacity=".8"/></svg>
<div class="menu" style="left:1217.2px;top:96.2px;width:19.2px;height:19.0px;border-radius:0 4px 4px 0"></div>
<svg style="left:1223.3999999999999px;top:105.0px;" width="6.4" height="3.2" viewBox="0 0 6.4 3.2"><path d="M0 0 L3.2 3.2 L6.4 0" fill="none" stroke="#e0e0e0" stroke-width="1.2" stroke-linecap="round" stroke-linejoin="round"/></svg>
<div class="fld" style="left:681.3px;top:122.5px;width:150.0px;height:19.0px;"></div>
<div class="menu" style="left:681.3px;top:122.5px;width:30.2px;height:19.0px;border-radius:3.5px 0 0 3.5px"></div>
<svg style="left:689.2px;top:124.50000000000001px;" width="14.6" height="14.6" viewBox="0 0 14.6 14.6"><defs><radialGradient id="bb696" cx=".4" cy=".32" r=".7" fx=".36" fy=".22"><stop offset="0" stop-color="#9c9c9c"/><stop offset=".25" stop-color="#626262"/><stop offset=".7" stop-color="#373839"/><stop offset=".9" stop-color="#3e4144"/><stop offset="1" stop-color="#53585c"/></radialGradient></defs>
      <circle cx="7.3" cy="7.3" r="7.3" fill="url(#bb696)"/>
      <path d="M6.46 2.86 L4.21 7.63 L8.33 4.64 L6.27 9.51 L10.21 6.90 L9.08 10.81" fill="none" stroke="#cfcfcf" stroke-width="1.55" stroke-linecap="round" stroke-linejoin="round"/></svg>
<div class="t " style="left:719.5px;top:125.19999999999999px;">TexDraw</div>
<div class="a" style="left:838.3px;top:123.0px;width:78.3px;height:18.2px;background:#e6d29b;border-radius:3px"></div>
<div class="menu" style="left:923.8px;top:122.5px;width:98.0px;height:19.0px;"></div>
<div class="t " style="left:930.5px;top:125.19999999999999px;">Mix</div>
<svg style="left:1012.6px;top:131.1px;" width="6" height="3.0" viewBox="0 0 6 3.0"><path d="M0 0 L3.0 3.0 L6 0" fill="none" stroke="#e0e0e0" stroke-width="1.2" stroke-linecap="round" stroke-linejoin="round"/></svg>
<div class="btn ho" style="left:1029px;top:122.5px;width:127px;height:19.0px;border-radius:3.5px 0 0 3.5px;overflow:hidden"><div class="a blue" style="left:0;top:0;width:8px;height:100%"></div></div>
<div class="t " style="left:1039.2px;top:125.19999999999999px;">Radius</div>
<div class="t " style="right:403.79999999999995px;top:125.19999999999999px;">40 px</div>
<div class="btn ho" style="left:1156.5px;top:122.5px;width:19.5px;height:19.0px;border-radius:0 3.5px 3.5px 0"></div>
<svg style="left:1158.3px;top:124px;" width="16" height="16" viewBox="0 0 16 16"><path d="M5.47 7.96 A2.6 2.6 0 0 0 9.44 11.23 M3.93 7.03 A4.4 4.4 0 0 0 10.64 12.57 M2.39 6.11 A6.2 6.2 0 0 0 11.85 13.91" fill="none" stroke="#e6e6e6" stroke-width=".95" opacity=".9"/>
      <path d="M7 10.4 L7.7 7.4 L11.6 3.4 C12.5 2.5 13.8 2.5 14.6 3.3 C15.4 4.1 15.4 5.4 14.5 6.3 L10.6 10.2z" fill="#e6e6e6"/></svg>
<div class="btn blue ho" style="left:1183.3px;top:122.5px;width:61.7px;height:19.0px;border-radius:3.5px 0 0 3.5px;overflow:hidden"><div class="t" style="left:9.6px;top:2.7px;color:#fff">Strength</div></div>
<div class="a" style="left:645.6px;top:152.8px;width:40.5px;height:33.3px;background:#4772b3;border-radius:4px 4px 0 0"></div>
<div class="a" style="left:645.6px;top:186.8px;width:40.5px;height:34.3px;background:#282828;border-radius:0"></div>
<div class="a" style="left:645.6px;top:222.8px;width:40.5px;height:33.3px;background:#282828;border-radius:0"></div>
<div class="a" style="left:645.6px;top:257.8px;width:40.5px;height:33.3px;background:#282828;border-radius:0"></div>
<div class="a" style="left:645.6px;top:292.8px;width:40.5px;height:33.3px;background:#282828;border-radius:0"></div>
<div class="a" style="left:645.6px;top:327.8px;width:40.5px;height:33.3px;background:#282828;border-radius:0 0 4px 4px"></div>
<div class="a" style="left:645.6px;top:368.7px;width:40.5px;height:32.1px;background:#282828;border-radius:4px"></div>
<svg style="left:645.6px;top:153px" width="40.5" height="34" viewBox="46.5 40 324.0 272">
      <path d="M122 240 C150 224 176 233 200 222 C224 211 244 213 260 216 C242 223 226 236 200 246 C170 257 146 250 122 240z" fill="#8f949c"/>
      <path d="M262 100 C270 106 268 118 262 126 L196 196 L170 172 L238 104 C246 96 256 95 262 100z" fill="#ececec"/>
      <path d="M166 178 L190 200 C188 222 162 233 136 226 C126 223 116 217 109 212 C124 208 132 200 138 190 C144 180 156 175 166 178z" fill="#ececec"/></svg>
<svg style="left:645.6px;top:188px" width="40.5" height="34" viewBox="46.5 320 324.0 272">
      <path d="M136 458 C132 496 162 520 194 519 C226 518 256 496 256 462 C250 468 240 472 232 474 L160 474 C150 470 142 464 136 458z" fill="#8c8c8c"/>
      <path d="M196 376 C206 402 238 426 238 456 C238 480 219 494 196 494 C173 494 155 480 155 456 C155 426 186 402 196 376z" fill="#ececec" stroke="#282828" stroke-width="7" paint-order="stroke"/></svg>
<svg style="left:645.6px;top:223px" width="40.5" height="34" viewBox="46.5 600 324.0 272">
      <ellipse cx="186" cy="794" rx="52" ry="7.5" fill="#8c8c8c" transform="rotate(-2 186 794)"/>
      <path d="M137 772 L151 788 L204 742 L222 762 L240 748 L248 700 L238 672 L208 654 L184 668 L150 690 L163 702 L152 713 L167 722 L158 735 L180 741 Z" fill="#ececec"/></svg>
<svg style="left:645.6px;top:258px" width="40.5" height="34" viewBox="46.5 32 324.0 272">
      <circle cx="195" cy="111" r="25" fill="#ececec"/><path d="M180 128 H210 L214 150 H176z" fill="#ececec"/>
      <rect x="144" y="146" width="102" height="24" rx="9" fill="#ececec"/>
      <rect x="150" y="176" width="90" height="8" fill="#ececec"/>
      <path d="M140 194 H250 L262 219 H128z" fill="#8c8c8c"/></svg>
<svg style="left:645.6px;top:293px" width="40.5" height="34" viewBox="46.5 312 324.0 272">
      <path d="M212 377 L267 432 L212 487 L157 432z" fill="#282828" stroke="#ececec" stroke-width="9.5" stroke-linejoin="round"/>
      <path d="M170 441 H254 L212 483z" fill="#ececec"/>
      <circle cx="145" cy="486" r="27" fill="#8c8c8c"/><path d="M166 447 L172 490 L124 468z" fill="#8c8c8c"/>
      <circle cx="216" cy="366" r="9" fill="none" stroke="#ececec" stroke-width="6"/>
      <path d="M208 378 V414" stroke="#ececec" stroke-width="6"/></svg>
<svg style="left:645.6px;top:328px" width="40.5" height="34" viewBox="46.5 592 324.0 272">
      <rect x="137" y="695" width="95" height="87" fill="#8c8c8c"/>
      <rect x="186" y="657" width="78" height="78" fill="#383838" stroke="#ececec" stroke-width="7"/>
      <path d="M201 722 V675 A47 47 0 0 1 248 722z" fill="#ececec"/></svg>
<svg style="left:645.6px;top:368.7px" width="40.5" height="32.1" viewBox="46.5 629.6 324 256.8">
      <path d="M110 814 C130 836 160 842 190 816 C215 793 240 770 262 778 C280 785 292 800 300 817" fill="none" stroke="#7fd0a0" stroke-width="9" stroke-linecap="round"/>
      <path d="M136.1 793.1 L115.7 771.1 L208.8 684.6 L229.2 706.6z" fill="#ececec"/>
      <path d="M213.8 679.9 L222 671 C228 665 238 666 243 672 C249 678 250 687 244 693 L234.2 701.9z" fill="#ececec"/>
      <path d="M112.5 774 L133 796 L98 808z" fill="#ececec"/>
      <path d="M344 848 V872 H320z" fill="#8a8a8a"/></svg>
<div class="t " style="left:704.5px;top:154.4px;color:#f0f0f0;text-shadow:0 0 2px rgba(0,0,0,.75),0 1px 1px rgba(0,0,0,.5)">User Perspective</div>
<div class="t " style="left:704.5px;top:172.2px;color:#f0f0f0;text-shadow:0 0 2px rgba(0,0,0,.75),0 1px 1px rgba(0,0,0,.5)">(1) Donut</div>
<svg style="left:1100px;top:140px;" width="150" height="110" viewBox="0 0 150 110">
      <line x1="94.8" y1="54.1" x2="94.5" y2="23.1" stroke="#2f83e3" stroke-width="2.1"/>
      <line x1="94.8" y1="54.1" x2="65" y2="52.1" stroke="#cf3a55" stroke-width="2.1"/>
      <line x1="94.8" y1="54.1" x2="83.4" y2="61.3" stroke="#7fcf12" stroke-width="2.1"/>
      <circle cx="106.7" cy="47.2" r="6.6" fill="#3c4033" stroke="#6a9a28" stroke-width="1.7"/>
      <circle cx="124.8" cy="56.8" r="7.3" fill="#6c3a45" stroke="#e23a52" stroke-width="1.7"/>
      <circle cx="95.4" cy="85.6" r="6.9" fill="#3a4e6e" stroke="#2f7fdc" stroke-width="1.7"/>
      <circle cx="94.6" cy="23.1" r="8.3" fill="#2f83e3"/>
      <circle cx="65.2" cy="52.2" r="7.9" fill="#cb3a55"/>
      <circle cx="83.4" cy="61.4" r="8.7" fill="#7fd20e"/>
      <g font-family="'DejaVu Sans','Liberation Sans',sans-serif" font-size="10.5" text-anchor="middle" style="letter-spacing:0">
        <text x="94.7" y="27" fill="#0c2547">Z</text><text x="65.2" y="56" fill="#3d0c16">X</text><text x="83.5" y="65.2" fill="#1f3a04">Y</text></g></svg>
<div class="a" style="left:1236px;top:158.5px;width:9px;height:14.0px;background:rgba(38,38,38,.6);border-radius:3px 0 0 3px"></div>
<svg style="left:1237.8px;top:161.5px;" width="5" height="8" viewBox="0 0 5 8"><path d="M4.2 .6 L.8 4 L4.2 7.4" fill="none" stroke="#bdbdbd" stroke-width="1.1"/></svg>
<div class="a" style="left:1209.1px;top:235.7px;width:27.0px;height:27.0px;background:rgba(30,30,30,.72);border-radius:50%"></div><svg style="left:1212.6px;top:239.2px;" width="20" height="20" viewBox="0 0 20 20"><circle cx="11.7" cy="9.2" r="6.5" fill="#e8e8e8"/><path d="M7.2 13.9 L2.9 17.9" stroke="#e8e8e8" stroke-width="2.5" stroke-linecap="round"/>
   <path d="M11.7 5.6 V12.8 M8.1 9.2 H15.3" stroke="#2a2a2a" stroke-width="1.6"/></svg>
<div class="a" style="left:1209.1px;top:265.7px;width:27.0px;height:27.0px;background:rgba(30,30,30,.72);border-radius:50%"></div><svg style="left:1212.6px;top:269.2px;" width="20" height="20" viewBox="0 0 20 20"><g transform="translate(10 10.6) scale(1.18) translate(-9.2 -9.6)"><path d="M4.6 11.8 L2.6 9.4 C2 8.6 2.6 7.8 3.6 8.2 L5.4 9.6 L4.6 4.4 C4.5 3.3 6 3 6.3 4.2 L7.4 8.2 L7.6 2.6 C7.6 1.4 9.3 1.4 9.4 2.6 L9.8 8 L11.2 3 C11.5 1.9 13.1 2.3 12.9 3.4 L12 8.6 L14.4 5 C15 4.1 16.3 4.9 15.8 5.9 L13.4 11 C12.8 13.4 12.6 14.6 11.6 16 C10 17 8 17 6.4 16 C6 14.6 5.6 13.4 4.6 11.8z" fill="#e8e8e8"/></g></svg>
<div class="a" style="left:1209.1px;top:295.9px;width:27.0px;height:27.0px;background:rgba(30,30,30,.72);border-radius:50%"></div><svg style="left:1212.6px;top:299.4px;" width="20" height="20" viewBox="0 0 20 20"><g transform="translate(10 10.4) scale(.9 1.02) translate(-10.2 -10)"><circle cx="6" cy="5.6" r="3.4" fill="#e8e8e8"/><circle cx="13" cy="5" r="4" fill="#e8e8e8"/><circle cx="6" cy="5.6" r="1.1" fill="#262626"/><circle cx="13" cy="5" r="1.3" fill="#262626"/>
      <rect x="4.6" y="9.6" width="10" height="7" rx="1" fill="#e8e8e8"/><path d="M15.4 12 L18.8 10 V16.4 L15.4 14.4z" fill="#e8e8e8"/><path d="M1.6 12.2 L4 13 L1.6 13.8z" fill="#e8e8e8"/></g></svg>
<div class="a" style="left:1209.1px;top:326.3px;width:27.0px;height:27.0px;background:rgba(30,30,30,.72);border-radius:50%"></div><svg style="left:1212.6px;top:329.8px;" width="20" height="20" viewBox="0 0 20 20"><path d="M5.2 3.4 H14.8 L18 16.6 H2z" fill="none" stroke="#e8e8e8" stroke-width="1.3" stroke-linejoin="round"/>
      <path d="M8.4 3.4 L7.2 16.6 M11.6 3.4 L12.8 16.6 M4.2 7.6 H15.8 M3.2 11.8 H16.8" fill="none" stroke="#e8e8e8" stroke-width="1.2"/></svg>
<div class="ed" style="left:1248px;top:93px;width:247px;height:127.5px;background:#282828;border-radius:5px"></div>
<div class="a" style="left:0;top:117.2px;width:1495px;height:103.3px;overflow:hidden;border-radius:0 0 0 5px"><div class="a" style="left:0;top:-117.2px;width:1552px;height:927px"><div class="a" style="left:1248px;top:129.5px;width:248px;height:20.0px;background:#2b2b2b"></div><div class="a" style="left:1248px;top:169.3px;width:248px;height:20.0px;background:#2b2b2b"></div><div class="a" style="left:1248px;top:209.0px;width:248px;height:20.0px;background:#2b2b2b"></div><div class="a" style="left:1276.5px;top:132px;width:0.9px;height:90px;background:#3e3e3e"></div><svg style="left:1273.8px;top:116.0px;" width="6.4" height="6.4" viewBox="0 0 6.4 6.4"><path d="M0 1.2800000000000002 H6.4 L3.2 5.760000000000001z" fill="#c8c8c8"/></svg><div class="a" style="left:1288px;top:109.7px;width:19px;height:19.0px;background:#4a4a4a;border-radius:4px;box-shadow:inset 0 0 0 1px #6a6a6a"></div><svg style="left:1291px;top:112.2px;" width="13" height="14" viewBox="0 0 13 14"><rect x=".5" y=".5" width="12" height="4" rx=".8" fill="#ededed"/><path d="M1.2 5.4 H11.8 V12.6 a.8 .8 0 0 1 -.8 .8 H2 a.8 .8 0 0 1 -.8 -.8z" fill="#ededed"/><rect x="4.4" y="7.2" width="4.2" height="1.6" rx=".6" fill="#4a4a4a"/></svg><div class="t " style="left:1311.6px;top:113.9px;color:#d8d8d8">Collection</div><svg style="left:1431.5px;top:113.0px;" width="12" height="12" viewBox="0 0 12 12"><rect x=".5" y=".5" width="11" height="11" rx="1.6" fill="#ededed"/><path d="M2.6 6 L5 8.6 L9.4 3.2" fill="none" stroke="#282828" stroke-width="1.7"/></svg><svg style="left:1451px;top:114.5px;" width="14" height="10" viewBox="0 0 14 10"><path d="M.6 5 C3.4 .6 10.6 .6 13.4 5 C10.6 9.4 3.4 9.4 .6 5z" fill="#e6e6e6"/><circle cx="7" cy="5" r="2.5" fill="#282828"/><circle cx="7" cy="5" r="1.1" fill="#e6e6e6"/></svg><svg style="left:1470.7px;top:113.4px;" width="14" height="12" viewBox="0 0 14 12"><path d="M4 1.8 L5 .4 H9 L10 1.8 H12.6 a1 1 0 0 1 1 1 V10.4 a1 1 0 0 1 -1 1 H1.4 a1 1 0 0 1 -1 -1 V2.8 a1 1 0 0 1 1 -1z" fill="#e6e6e6"/><circle cx="7" cy="6.6" r="3.3" fill="#282828"/><circle cx="7" cy="6.6" r="2.2" fill="none" stroke="#e6e6e6" stroke-width="1"/></svg><svg style="left:1294.2px;top:136.3px;" width="6.4" height="6.4" viewBox="0 0 6.4 6.4"><path d="M1.2800000000000002 0 V6.4 L6.08 3.2z" fill="#8a8a8a"/></svg><svg style="left:1308.7px;top:132.1px;" width="17" height="14" viewBox="0 0 17 14"><g fill="#8c5d37"><circle cx="4.6" cy="3.8" r="3"/><circle cx="11" cy="3.4" r="3.4"/><rect x="3" y="7.4" width="9.6" height="6" rx="1"/><path d="M13.2 9.4 L16.4 7.8 V13 L13.2 11.4z"/><path d="M.4 9.6 L2.4 10.4 L.4 11.2z"/></g>
       <circle cx="4.6" cy="3.8" r="1" fill="#282828"/><circle cx="11" cy="3.4" r="1.2" fill="#282828"/></svg><div class="t " style="left:1331.4px;top:134.3px;color:#7b7b7b">Camera</div><div class="a" style="left:1393.8px;top:129.9px;width:19.8px;height:19.2px;background:#535353;border-radius:4.5px;box-shadow:inset 0 0 0 1px #6c6c6c"></div><svg style="left:1396.2px;top:132.5px;" width="15" height="14" viewBox="0 0 15 14"><g fill="none" stroke="#27917a" stroke-width="1.1"><circle cx="4.2" cy="4" r="2.6"/><circle cx="10" cy="3.6" r="3"/><rect x="2.8" y="7.6" width="8.6" height="5.2" rx="1"/><path d="M11.8 9.6 L14.4 8.4 V12.4 L11.8 11.2"/></g></svg><svg style="left:1451px;top:134.5px;" width="14" height="10" viewBox="0 0 14 10"><path d="M.8 3.6 C3.6 8.4 10.4 8.4 13.2 3.6" fill="none" stroke="#bdbdbd" stroke-width="1.1" stroke-linecap="round"/></svg><svg style="left:1470.7px;top:133.7px;" width="14" height="12" viewBox="0 0 14 12"><path d="M4 1.8 L5 .4 H9 L10 1.8 H12.6 a1 1 0 0 1 1 1 V10.4 a1 1 0 0 1 -1 1 H1.4 a1 1 0 0 1 -1 -1 V2.8 a1 1 0 0 1 1 -1z" fill="#e6e6e6"/><circle cx="7" cy="6.6" r="3.3" fill="#282828"/><circle cx="7" cy="6.6" r="2.2" fill="none" stroke="#e6e6e6" stroke-width="1"/></svg><svg style="left:1252.5px;top:151.4px;" width="12" height="14" viewBox="0 0 12 14"><rect x="0.0" y="0.0" width="2" height="2" fill="#e6e6e6"/><rect x="4.0" y="0.0" width="2" height="2" fill="#e6e6e6"/><rect x="8.0" y="0.0" width="2" height="2" fill="#e6e6e6"/><rect x="2.0" y="2.0" width="2" height="2" fill="#e6e6e6"/><rect x="6.0" y="2.0" width="2" height="2" fill="#e6e6e6"/><rect x="10.0" y="2.0" width="2" height="2" fill="#e6e6e6"/><rect x="0.0" y="4.0" width="2" height="2" fill="#e6e6e6"/><rect x="4.0" y="4.0" width="2" height="2" fill="#e6e6e6"/><rect x="8.0" y="4.0" width="2" height="2" fill="#e6e6e6"/><path d="M0 7 H12 V9.4 H10 V11 H8.4 V9.4 H6.8 V12.6 H4 V9.4 H2.4 V11 H0z" fill="#9a9a9a"/></svg><svg style="left:1294.2px;top:156.20000000000002px;" width="6.4" height="6.4" viewBox="0 0 6.4 6.4"><path d="M1.2800000000000002 0 V6.4 L6.08 3.2z" fill="#d4d4d4"/></svg><div class="a" style="left:1307.8px;top:149.8px;width:19.8px;height:19.2px;background:#555;border-radius:4.5px;box-shadow:inset 0 0 0 1px #777"></div><svg style="left:1309.2px;top:151.8px;" width="16" height="16" viewBox="0 0 16 16"><path d="M2.2 2.6 H13.8 L8 13.4z" fill="none" stroke="#e9934a" stroke-width="2.5" stroke-linejoin="round" opacity="1"/></svg><div class="t " style="left:1331.4px;top:154.3px;color:#f0f0f0">Donut</div><svg style="left:1384.9px;top:151.70000000000002px" width="16" height="16" viewBox="800 335 135 135"><path d="M822 458 C812 462 806 450 814 440 L856 398 C848 372 862 348 888 342 L872 370 L890 392 L924 384 C922 410 896 424 872 414 L832 454 C828 458 826 458 822 458Z" fill="none" stroke="#5b8ad8" stroke-width="9.5" stroke-linejoin="round"/></svg><svg style="left:1405.1px;top:151.4px;" width="16" height="16" viewBox="0 0 16 16"><g opacity="1"><path d="M3 2.7 H13 L8 13.4z" fill="none" stroke="#1fc493" stroke-width="1.1"/>
      <circle cx="3" cy="2.7" r="1.65" fill="#282828" stroke="#1fc493" stroke-width="1.05"/><circle cx="13" cy="2.7" r="1.65" fill="#282828" stroke="#1fc493" stroke-width="1.05"/><circle cx="8" cy="13.4" r="1.65" fill="#282828" stroke="#1fc493" stroke-width="1.05"/></g></svg><svg style="left:1451px;top:154.6px;" width="14" height="10" viewBox="0 0 14 10"><path d="M.6 5 C3.4 .6 10.6 .6 13.4 5 C10.6 9.4 3.4 9.4 .6 5z" fill="#e6e6e6"/><circle cx="7" cy="5" r="2.5" fill="#282828"/><circle cx="7" cy="5" r="1.1" fill="#e6e6e6"/></svg><svg style="left:1470.7px;top:153.6px;" width="14" height="12" viewBox="0 0 14 12"><path d="M4 1.8 L5 .4 H9 L10 1.8 H12.6 a1 1 0 0 1 1 1 V10.4 a1 1 0 0 1 -1 1 H1.4 a1 1 0 0 1 -1 -1 V2.8 a1 1 0 0 1 1 -1z" fill="#e6e6e6"/><circle cx="7" cy="6.6" r="3.3" fill="#282828"/><circle cx="7" cy="6.6" r="2.2" fill="none" stroke="#e6e6e6" stroke-width="1"/></svg><div class="a" style="left:1256.2px;top:177.60000000000002px;width:3.4px;height:3.4px;background:#e6e6e6;border-radius:50%"></div><svg style="left:1294.2px;top:176.10000000000002px;" width="6.4" height="6.4" viewBox="0 0 6.4 6.4"><path d="M1.2800000000000002 0 V6.4 L6.08 3.2z" fill="#8a8a8a"/></svg><svg style="left:1309.2px;top:171.70000000000002px;" width="16" height="16" viewBox="0 0 16 16"><path d="M2.2 2.6 H13.8 L8 13.4z" fill="none" stroke="#8e5e36" stroke-width="2.5" stroke-linejoin="round" opacity="1"/></svg><div class="t " style="left:1331.4px;top:174.20000000000002px;color:#7b7b7b">Icing</div><svg style="left:1378.6px;top:171.3px;" width="16" height="16" viewBox="0 0 16 16"><g opacity="1"><path d="M3 2.7 H13 L8 13.4z" fill="none" stroke="#1d8f70" stroke-width="1.1"/>
      <circle cx="3" cy="2.7" r="1.65" fill="#282828" stroke="#1d8f70" stroke-width="1.05"/><circle cx="13" cy="2.7" r="1.65" fill="#282828" stroke="#1d8f70" stroke-width="1.05"/><circle cx="8" cy="13.4" r="1.65" fill="#282828" stroke="#1d8f70" stroke-width="1.05"/></g></svg><svg style="left:1451px;top:174.3px;" width="14" height="10" viewBox="0 0 14 10"><path d="M.8 3.6 C3.6 8.4 10.4 8.4 13.2 3.6" fill="none" stroke="#bdbdbd" stroke-width="1.1" stroke-linecap="round"/></svg><svg style="left:1470.7px;top:173.5px;" width="14" height="12" viewBox="0 0 14 12"><path d="M4 1.8 L5 .4 H9 L10 1.8 H12.6 a1 1 0 0 1 1 1 V10.4 a1 1 0 0 1 -1 1 H1.4 a1 1 0 0 1 -1 -1 V2.8 a1 1 0 0 1 1 -1z" fill="#e6e6e6"/><circle cx="7" cy="6.6" r="3.3" fill="#282828"/><circle cx="7" cy="6.6" r="2.2" fill="none" stroke="#e6e6e6" stroke-width="1"/></svg><svg style="left:1294.2px;top:196.0px;" width="6.4" height="6.4" viewBox="0 0 6.4 6.4"><path d="M1.2800000000000002 0 V6.4 L6.08 3.2z" fill="#d4d4d4"/></svg><svg style="left:1310px;top:191.2px;" width="14" height="16" viewBox="0 0 14 16"><path d="M7 .8 C10.4 .8 12.8 3.2 12.8 6.2 C12.8 8.4 11.4 9.6 10.6 10.8 V12 H3.4 V10.8 C2.6 9.6 1.2 8.4 1.2 6.2 C1.2 3.2 3.6 .8 7 .8z" fill="#e9934a"/>
      <rect x="4.2" y="12.8" width="5.6" height="1.4" fill="#e9934a"/><rect x="5" y="14.8" width="4" height="1" fill="#e9934a"/>
      <path d="M4.4 5.4 L6.4 7.6 L5.4 10.4 M9.6 5.4 L7.6 7.6 L8.6 10.4 M4.8 7.4 H9.2" fill="none" stroke="#3a2a1a" stroke-width=".9"/></svg><div class="t " style="left:1331.4px;top:194.1px;color:#f0f0f0">Light</div><svg style="left:1379.5px;top:191.79999999999998px;" width="15" height="16" viewBox="0 0 15 16"><circle cx="7.5" cy="7" r="6" fill="none" stroke="#1fc493" stroke-width="1.1"/><circle cx="7.5" cy="6.2" r="1.6" fill="#1fc493"/><path d="M7.5 8.4 V11" stroke="#1fc493" stroke-width="1.1"/><path d="M7.5 13.6 V15.4" stroke="#1fc493" stroke-width="1.1"/></svg><svg style="left:1451px;top:194.39999999999998px;" width="14" height="10" viewBox="0 0 14 10"><path d="M.6 5 C3.4 .6 10.6 .6 13.4 5 C10.6 9.4 3.4 9.4 .6 5z" fill="#e6e6e6"/><circle cx="7" cy="5" r="2.5" fill="#282828"/><circle cx="7" cy="5" r="1.1" fill="#e6e6e6"/></svg><svg style="left:1470.7px;top:193.39999999999998px;" width="14" height="12" viewBox="0 0 14 12"><path d="M4 1.8 L5 .4 H9 L10 1.8 H12.6 a1 1 0 0 1 1 1 V10.4 a1 1 0 0 1 -1 1 H1.4 a1 1 0 0 1 -1 -1 V2.8 a1 1 0 0 1 1 -1z" fill="#e6e6e6"/><circle cx="7" cy="6.6" r="3.3" fill="#282828"/><circle cx="7" cy="6.6" r="2.2" fill="none" stroke="#e6e6e6" stroke-width="1"/></svg><div class="a" style="left:1256.2px;top:217.3px;width:3.4px;height:3.4px;background:#e6e6e6;border-radius:50%"></div><svg style="left:1294.2px;top:215.8px;" width="6.4" height="6.4" viewBox="0 0 6.4 6.4"><path d="M1.2800000000000002 0 V6.4 L6.08 3.2z" fill="#8a8a8a"/></svg><svg style="left:1309.2px;top:211.4px;" width="16" height="16" viewBox="0 0 16 16"><path d="M2.2 2.6 H13.8 L8 13.4z" fill="none" stroke="#8e5e36" stroke-width="2.5" stroke-linejoin="round" opacity="1"/></svg><div class="t " style="left:1331.4px;top:213.9px;color:#7b7b7b">Plane</div><svg style="left:1382.4px;top:211.0px;" width="16" height="16" viewBox="0 0 16 16"><g opacity="1"><path d="M3 2.7 H13 L8 13.4z" fill="none" stroke="#1d8f70" stroke-width="1.1"/>
      <circle cx="3" cy="2.7" r="1.65" fill="#282828" stroke="#1d8f70" stroke-width="1.05"/><circle cx="13" cy="2.7" r="1.65" fill="#282828" stroke="#1d8f70" stroke-width="1.05"/><circle cx="8" cy="13.4" r="1.65" fill="#282828" stroke="#1d8f70" stroke-width="1.05"/></g></svg><svg style="left:1451px;top:214.0px;" width="14" height="10" viewBox="0 0 14 10"><path d="M.8 3.6 C3.6 8.4 10.4 8.4 13.2 3.6" fill="none" stroke="#bdbdbd" stroke-width="1.1" stroke-linecap="round"/></svg><svg style="left:1470.7px;top:213.2px;" width="14" height="12" viewBox="0 0 14 12"><path d="M4 1.8 L5 .4 H9 L10 1.8 H12.6 a1 1 0 0 1 1 1 V10.4 a1 1 0 0 1 -1 1 H1.4 a1 1 0 0 1 -1 -1 V2.8 a1 1 0 0 1 1 -1z" fill="#e6e6e6"/><circle cx="7" cy="6.6" r="3.3" fill="#282828"/><circle cx="7" cy="6.6" r="2.2" fill="none" stroke="#e6e6e6" stroke-width="1"/></svg></div></div>
<div class="a" style="left:1248px;top:93px;width:247px;height:24.2px;background:#303030;border-radius:5px 5px 0 0"></div>
<div class="menu" style="left:1256px;top:96.2px;width:31px;height:19.0px;"></div>
<svg style="left:1260px;top:98.5px;" width="15" height="14" viewBox="0 0 15 14"><rect x=".6" y=".8" width="5" height="2.8" fill="#e6e6e6"/><path d="M2 3.6 V11.4 H6 M2 7 H6" fill="none" stroke="#e6e6e6" stroke-width="1.1"/><rect x="6.6" y="5.4" width="7.4" height="2.8" fill="#e6e6e6"/><rect x="6.6" y="10" width="7.4" height="2.8" fill="#e6e6e6"/></svg>
<svg style="left:1277.6px;top:105.3px;" width="6" height="3.0" viewBox="0 0 6 3.0"><path d="M0 0 L3.0 3.0 L6 0" fill="none" stroke="#e0e0e0" stroke-width="1.2" stroke-linecap="round" stroke-linejoin="round"/></svg>
<div class="menu" style="left:1293px;top:96.2px;width:31px;height:19.0px;"></div>
<svg style="left:1297px;top:98.3px;" width="16" height="15" viewBox="0 0 16 15"><path d="M1 4.2 V14 H11" fill="none" stroke="#e6e6e6" stroke-width=".9" opacity=".7"/>
      <path d="M2.8 2.6 V12.2 H12.6" fill="none" stroke="#e6e6e6" stroke-width=".9" opacity=".85"/>
      <rect x="4.8" y="1" width="10" height="9.4" rx="1" fill="none" stroke="#e6e6e6" stroke-width="1.2"/>
      <path d="M5.6 9.6 L9 4.4 L11.2 7.6 L12.2 6.6 L14.2 9.6z" fill="#e6e6e6"/><circle cx="12.6" cy="3.6" r="1" fill="#e6e6e6"/></svg>
<svg style="left:1314.8px;top:105.3px;" width="6" height="3.0" viewBox="0 0 6 3.0"><path d="M0 0 L3.0 3.0 L6 0" fill="none" stroke="#e0e0e0" stroke-width="1.2" stroke-linecap="round" stroke-linejoin="round"/></svg>
<div class="fld" style="left:1341px;top:96.2px;width:116px;height:19.0px;"></div>
<svg style="left:1346px;top:98.5px;" width="15" height="15" viewBox="0 0 15 15"><circle cx="9.4" cy="5.4" r="4.5" fill="none" stroke="#d8d8d8" stroke-width="1.25"/><path d="M6.2 8.6 L.6 14.2" stroke="#d8d8d8" stroke-width="1.25" stroke-linecap="round"/></svg>
<div class="menu" style="left:1474.3px;top:96.2px;width:20.7px;height:19.0px;border-radius:4px 0 0 4px"></div>
<svg style="left:1478.5px;top:98.5px;" width="14" height="14" viewBox="0 0 14 14"><path d="M.8 1 H13.2 L8.4 6.8 V13 L5.6 11.4 V6.8z" fill="none" stroke="#e6e6e6" stroke-width="1.2" stroke-linejoin="round"/></svg>
<div class="ed" style="left:1248px;top:224.5px;width:247.4px;height:607.5px;background:#303030;border-radius:5px 5px 6px 5px"></div>
<div class="a" style="left:1248px;top:250px;width:28px;height:582px;background:#1d1d1d"></div>
<div class="a" style="left:1249.8px;top:258.8px;width:26.2px;height:26.0px;background:#303030;border-radius:4px 0 0 4px"></div>
<div class="menu" style="left:1256px;top:227.8px;width:31px;height:17.8px;"></div>
<svg style="left:1260.5px;top:229.6px;" width="15" height="14" viewBox="0 0 15 14"><rect x=".6" y=".8" width="12.4" height="5.4" rx="2.7" fill="#e6e6e6"/><rect x=".6" y="7.8" width="12.4" height="5.4" rx="2.7" fill="#e6e6e6"/><rect x="6.4" y="1.9" width="5.4" height="3.2" rx="1.6" fill="#282828"/><rect x="1.8" y="8.9" width="5.4" height="3.2" rx="1.6" fill="#282828" opacity="0"/></svg>
<svg style="left:1277.6px;top:236.1px;" width="6" height="3.0" viewBox="0 0 6 3.0"><path d="M0 0 L3.0 3.0 L6 0" fill="none" stroke="#e0e0e0" stroke-width="1.2" stroke-linecap="round" stroke-linejoin="round"/></svg>
<div class="fld" style="left:1315px;top:227.8px;width:115.3px;height:17.8px;"></div>
<svg style="left:1319.5px;top:229.3px;" width="15" height="15" viewBox="0 0 15 15"><circle cx="9.4" cy="5.4" r="4.5" fill="none" stroke="#d8d8d8" stroke-width="1.25"/><path d="M6.2 8.6 L.6 14.2" stroke="#d8d8d8" stroke-width="1.25" stroke-linecap="round"/></svg>
<div class="menu" style="left:1468.4px;top:227.8px;width:18.9px;height:17.8px;"></div>
<svg style="left:1475.0px;top:236.1px;" width="6" height="3.0" viewBox="0 0 6 3.0"><path d="M0 0 L3.0 3.0 L6 0" fill="none" stroke="#e0e0e0" stroke-width="1.2" stroke-linecap="round" stroke-linejoin="round"/></svg>
<svg style="left:1254.8px;top:263.5px;" width="17" height="17" viewBox="0 0 17 17"><rect x="2.7" y=".8" width="1.5" height="7" fill="#e6e6e6"/><path d="M1.2 8.6 C1.2 7.6 2 7.4 3.45 7.4 C4.9 7.4 5.7 7.6 5.7 8.6 V13 C5.7 14.6 4.8 15.4 3.45 15.4 C2.1 15.4 1.2 14.6 1.2 13z" fill="#e6e6e6"/>
      <path d="M9.2 .8 V3.4 C9.2 5 10 6 11 6.5 V14.2 C11 15 11.6 15.5 12.4 15.5 C13.2 15.5 13.8 15 13.8 14.2 V6.5 C14.8 6 15.6 5 15.6 3.4 V.8 H14 V3.8 H10.8 V.8z" fill="#e6e6e6"/></svg>
<svg style="left:1255.3px;top:298.7px;" width="16" height="16" viewBox="0 0 16 16"><path d="M1 5.2 a1 1 0 0 1 1 -1 H14 a1 1 0 0 1 1 1 V13.6 a1 1 0 0 1 -1 1 H2 a1 1 0 0 1 -1 -1z" fill="#dcdcdc"/><rect x="2.4" y="5.8" width="9" height="7.2" fill="#333"/><rect x="12.5" y="6.4" width="1.4" height="1.4" fill="#333"/><rect x="12.5" y="9" width="1.4" height="1.4" fill="#333"/><path d="M4.4 4.2 V3 H8.4 V4.2" fill="#dcdcdc"/><rect x="12.4" y="1.6" width="1.2" height="2.6" fill="#dcdcdc"/></svg>
<svg style="left:1255.3px;top:327.2px;" width="16" height="16" viewBox="0 0 16 16"><path d="M1.2 2.2 H14.8 V6.4 H12.8 V4.8 H3.2 V6.4 H1.2z" fill="#dcdcdc"/><rect x="3.8" y="6.4" width="8.4" height="8" fill="none" stroke="#dcdcdc" stroke-width="1.1"/><path d="M5 13.4 L8 9.6 L11 13.4z" fill="#dcdcdc"/></svg>
<svg style="left:1255.3px;top:354.9px;" width="16" height="16" viewBox="0 0 16 16"><path d="M1.2 5 V14.8 H11" fill="none" stroke="#dcdcdc" stroke-width=".9" opacity=".7"/><path d="M3 3.4 V13 H12.8" fill="none" stroke="#dcdcdc" stroke-width=".9" opacity=".85"/><rect x="5" y="1.4" width="10" height="9.6" rx="1" fill="none" stroke="#dcdcdc" stroke-width="1.2"/><path d="M5.8 10.2 L9.2 5 L11.4 8.2 L12.4 7.2 L14.4 10.2z" fill="#dcdcdc"/><circle cx="12.8" cy="4" r="1" fill="#dcdcdc"/></svg>
<svg style="left:1255.3px;top:383.3px;" width="16" height="16" viewBox="0 0 16 16"><path d="M4.6 2 L8 11.6 H1.2z" fill="#b4b4b4"/><circle cx="10.6" cy="10.6" r="3.2" fill="none" stroke="#dcdcdc" stroke-width="1.3"/><circle cx="12.4" cy="4.2" r="1.7" fill="#dcdcdc"/></svg>
<svg style="left:1255.3px;top:411.8px;" width="16" height="16" viewBox="0 0 16 16"><circle cx="8" cy="8" r="6" fill="none" stroke="#d0586a" stroke-width="1.2"/><path d="M4.2 4 C6 5 7.4 4.4 8.6 5.4 C9.6 6.4 8 7.6 9 8.6 C10 9.6 11.8 9 12.6 10.2 C11.4 12.6 9 13.6 6.8 13.2 C7.6 11.6 6.4 10.8 5.4 10 C4.4 9.2 3 8.6 2.6 7 C2.8 5.8 3.4 4.8 4.2 4z" fill="#d0586a"/><path d="M1.4 13.8 L14.6 2.4" stroke="#d0586a" stroke-width="1"/></svg>
<svg style="left:1255.3px;top:448px;" width="16" height="16" viewBox="0 0 16 16"><rect x="1.6" y="2" width="12.8" height="3.6" fill="none" stroke="#dcdcdc" stroke-width="1.2"/><path d="M2.6 5.6 V14 H13.4 V5.6" fill="none" stroke="#dcdcdc" stroke-width="1.2"/><rect x="6" y="8" width="4" height="2" fill="#dcdcdc"/></svg>
<svg style="left:1255.3px;top:483.5px;" width="16" height="16" viewBox="0 0 16 16"><rect x="4" y="4" width="8" height="8" fill="#e38b45"/><path d="M1.2 4 V1.2 H4 M12 1.2 H14.8 V4 M14.8 12 V14.8 H12 M4 14.8 H1.2 V12" fill="none" stroke="#e38b45" stroke-width="1"/></svg>
<svg style="left:1254.8999999999999px;top:511.0px" width="16.8" height="16.8" viewBox="800 335 135 135"><path d="M822 458 C812 462 806 450 814 440 L856 398 C848 372 862 348 888 342 L872 370 L890 392 L924 384 C922 410 896 424 872 414 L832 454 C828 458 826 458 822 458Z" fill="#5b8ad8" stroke="#5b8ad8" stroke-width="9" stroke-linejoin="round"/></svg>
<svg style="left:1255.3px;top:539.3px;" width="16" height="16" viewBox="0 0 16 16"><path d="M3 3 L13 6 M3 3 L4 13.4 M3 3 L13.6 13.6" stroke="#5b8ad8" stroke-width="1"/><circle cx="3" cy="3" r="2" fill="#5b8ad8"/><circle cx="13.2" cy="6" r="1.5" fill="#5b8ad8"/><circle cx="4" cy="13.6" r="1.3" fill="#5b8ad8"/><circle cx="13.6" cy="13.6" r="1.3" fill="#5b8ad8"/></svg>
<svg style="left:1255.3px;top:567.3px;" width="16" height="16" viewBox="0 0 16 16"><path d="M11.6 3.6 A6 6 0 1 0 13.6 10.6" fill="none" stroke="#5b8ad8" stroke-width="1.2"/><circle cx="8" cy="8.4" r="2.6" fill="#5b8ad8"/><circle cx="13" cy="3.6" r="1.4" fill="#5b8ad8"/></svg>
<svg style="left:1255.3px;top:595.8px;" width="16" height="16" viewBox="0 0 16 16"><path d="M1.4 10 C1.4 7 3.6 5.4 6 5.4 C8 5.4 9 4.6 10 3 C11 1.4 13.6 1.4 14.4 3.2 C15.2 5 14 6.6 12.6 7.4 C11.2 8.2 11 9.4 10.8 10.8 C10.4 13.4 8.2 14.8 6 14.8 C3.4 14.8 1.4 12.8 1.4 10z" fill="none" stroke="#5b8ad8" stroke-width="1.2"/><circle cx="6" cy="10" r="2.1" fill="none" stroke="#5b8ad8" stroke-width="1.2"/><circle cx="12.2" cy="4.6" r="1" fill="#5b8ad8"/></svg>
<svg style="left:1255.3px;top:623px;" width="16" height="16" viewBox="0 0 16 16"><g opacity="1"><path d="M3 2.7 H13 L8 13.4z" fill="none" stroke="#1fc493" stroke-width="1.1"/>
      <circle cx="3" cy="2.7" r="1.65" fill="#1d1d1d" stroke="#1fc493" stroke-width="1.05"/><circle cx="13" cy="2.7" r="1.65" fill="#1d1d1d" stroke="#1fc493" stroke-width="1.05"/><circle cx="8" cy="13.4" r="1.65" fill="#1d1d1d" stroke="#1fc493" stroke-width="1.05"/></g></svg>
<svg style="left:1255.3px;top:651.2px;" width="16" height="16" viewBox="0 0 16 16"><circle cx="8" cy="8" r="6.2" fill="none" stroke="#d0586a" stroke-width="1.2"/><path d="M8 1.8 A6.2 6.2 0 0 1 14.2 8 H8z M8 14.2 A6.2 6.2 0 0 1 1.8 8 H8z" fill="#d0586a"/></svg>
<svg style="left:1255.3px;top:687.4px;" width="16" height="16" viewBox="0 0 16 16"><rect x="1.0" y="1.0" width="2.8" height="2.8" fill="#d0586a"/><rect x="3.8" y="1.0" width="2.8" height="2.8" fill="#5a2c35"/><rect x="6.6" y="1.0" width="2.8" height="2.8" fill="#d0586a"/><rect x="9.4" y="1.0" width="2.8" height="2.8" fill="#5a2c35"/><rect x="12.2" y="1.0" width="2.8" height="2.8" fill="#d0586a"/><rect x="1.0" y="3.8" width="2.8" height="2.8" fill="#5a2c35"/><rect x="3.8" y="3.8" width="2.8" height="2.8" fill="#d0586a"/><rect x="6.6" y="3.8" width="2.8" height="2.8" fill="#5a2c35"/><rect x="9.4" y="3.8" width="2.8" height="2.8" fill="#d0586a"/><rect x="12.2" y="3.8" width="2.8" height="2.8" fill="#5a2c35"/><rect x="1.0" y="6.6" width="2.8" height="2.8" fill="#d0586a"/><rect x="3.8" y="6.6" width="2.8" height="2.8" fill="#5a2c35"/><rect x="6.6" y="6.6" width="2.8" height="2.8" fill="#d0586a"/><rect x="9.4" y="6.6" width="2.8" height="2.8" fill="#5a2c35"/><rect x="12.2" y="6.6" width="2.8" height="2.8" fill="#d0586a"/><rect x="1.0" y="9.4" width="2.8" height="2.8" fill="#5a2c35"/><rect x="3.8" y="9.4" width="2.8" height="2.8" fill="#d0586a"/><rect x="6.6" y="9.4" width="2.8" height="2.8" fill="#5a2c35"/><rect x="9.4" y="9.4" width="2.8" height="2.8" fill="#d0586a"/><rect x="12.2" y="9.4" width="2.8" height="2.8" fill="#5a2c35"/><rect x="1.0" y="12.2" width="2.8" height="2.8" fill="#d0586a"/><rect x="3.8" y="12.2" width="2.8" height="2.8" fill="#5a2c35"/><rect x="6.6" y="12.2" width="2.8" height="2.8" fill="#d0586a"/><rect x="9.4" y="12.2" width="2.8" height="2.8" fill="#5a2c35"/><rect x="12.2" y="12.2" width="2.8" height="2.8" fill="#d0586a"/></svg>
<svg style="left:1290.30px;top:256.90px" width="21.20" height="21.20" viewBox="105 93 160 160">
      <path d="M122 240 C150 224 176 233 200 222 C224 211 244 213 260 216 C242 223 226 236 200 246 C170 257 146 250 122 240z" fill="#8c8c8c"/>
      <path d="M262 100 C270 106 268 118 262 126 L196 196 L170 172 L238 104 C246 96 256 95 262 100z" fill="#ececec"/>
      <path d="M166 178 L190 200 C188 222 162 233 136 226 C126 223 116 217 109 212 C124 208 132 200 138 190 C144 180 156 175 166 178z" fill="#ececec"/></svg>
<div class="t " style="left:1324.2px;top:259.75px;color:#e8e8e8">Draw</div>
<div class="pnl" style="left:1284px;top:295.5px;width:204px;height:172.3px;"></div>
<svg style="left:1291.8000000000002px;top:305.65000000000003px;" width="9.2" height="5.4" viewBox="0 0 9.2 5.4"><path d="M.5 .5 L4.6 4.7 L8.7 .5" fill="none" stroke="#d0d0d0" stroke-width="1.1" stroke-linecap="round" stroke-linejoin="round"/></svg><div class="t " style="left:1306.5px;top:301.05px;color:#e6e6e6">Texture Slots</div>
<svg style="left:1470px;top:305.8px;" width="12" height="5" viewBox="0 0 12 5"><rect x="0.0" y="0.0" width="1.6" height="1.6" fill="#606060"/><rect x="3.0" y="0.0" width="1.6" height="1.6" fill="#606060"/><rect x="6.0" y="0.0" width="1.6" height="1.6" fill="#606060"/><rect x="9.0" y="0.0" width="1.6" height="1.6" fill="#606060"/><rect x="0.0" y="3.0" width="1.6" height="1.6" fill="#606060"/><rect x="3.0" y="3.0" width="1.6" height="1.6" fill="#606060"/><rect x="6.0" y="3.0" width="1.6" height="1.6" fill="#606060"/><rect x="9.0" y="3.0" width="1.6" height="1.6" fill="#606060"/></svg>
<div class="t " style="right:190px;top:331.45px;">Mode</div>
<div class="menu pm" style="left:1372.6px;top:329.4px;width:105.9px;height:17.6px;"></div>
<div class="t " style="left:1379.8px;top:331.35px;">Material</div>
<svg style="left:1469.3px;top:337.7px;" width="6" height="3.0" viewBox="0 0 6 3.0"><path d="M0 0 L3.0 3.0 L6 0" fill="none" stroke="#e0e0e0" stroke-width="1.2" stroke-linecap="round" stroke-linejoin="round"/></svg>
<div class="a" style="left:1293px;top:365.4px;width:157.3px;height:57.6px;background:#282828;border-radius:3.5px;box-shadow:inset 0 0 0 1px #333"></div>
<div class="a" style="left:1298.3px;top:370.6px;width:147.7px;height:17.6px;background:#484b53;border-radius:3px"></div>
<div class="a" style="left:1300.8px;top:371.4px;width:16.4px;height:16.1px;background:#ffca70"></div>
<div class="t " style="left:1323.4px;top:372.35px;color:#f2f2f2">DonutSurface</div>
<svg style="left:1303.8px;top:411.2px;" width="5.6" height="5.6" viewBox="0 0 5.6 5.6"><path d="M1.1199999999999999 0 V5.6 L5.319999999999999 2.8z" fill="#c0c0c0"/></svg>
<svg style="left:1376px;top:411.8px;" width="12" height="5" viewBox="0 0 12 5"><rect x="0.0" y="0.0" width="1.6" height="1.6" fill="#6a6a6a"/><rect x="3.0" y="0.0" width="1.6" height="1.6" fill="#6a6a6a"/><rect x="6.0" y="0.0" width="1.6" height="1.6" fill="#6a6a6a"/><rect x="9.0" y="0.0" width="1.6" height="1.6" fill="#6a6a6a"/><rect x="0.0" y="3.0" width="1.6" height="1.6" fill="#6a6a6a"/><rect x="3.0" y="3.0" width="1.6" height="1.6" fill="#6a6a6a"/><rect x="6.0" y="3.0" width="1.6" height="1.6" fill="#6a6a6a"/><rect x="9.0" y="3.0" width="1.6" height="1.6" fill="#6a6a6a"/></svg>
<div class="menu" style="left:1460.6px;top:365.4px;width:17.9px;height:17.6px;box-shadow:none;background:#282828"></div>
<svg style="left:1465.3px;top:369.9px;" width="9" height="9" viewBox="0 0 9 9"><path d="M4.5 .4 V8.6 M.4 4.5 H8.6" stroke="#e6e6e6" stroke-width="1.2"/></svg>
<div class="btn" style="left:1293px;top:441.3px;width:185.5px;height:18.7px;"></div>
<svg style="left:1296.6px;top:442.6px;" width="16" height="16" viewBox="0 0 16 16"><path d="M6.4 1.2 H14 V14.6 H1.4 V6.2 C1.4 3.2 3.4 1.2 6.4 1.2z" fill="none" stroke="#e6e6e6" stroke-width="1.2" stroke-linejoin="round"/><path d="M7.2 7.6 L12 12.4 M7.2 11.6 V7.6 H11.2" fill="none" stroke="#e6e6e6" stroke-width="1.3"/></svg>
<div class="t " style="left:1352px;top:443.65000000000003px;color:#ececec">Save All Images</div>
<div class="pnl" style="left:1284px;top:471px;width:204px;height:180px;"></div>
<svg style="left:1291.8000000000002px;top:480.95000000000005px;" width="9.2" height="5.4" viewBox="0 0 9.2 5.4"><path d="M.5 .5 L4.6 4.7 L8.7 .5" fill="none" stroke="#d0d0d0" stroke-width="1.1" stroke-linecap="round" stroke-linejoin="round"/></svg><div class="t " style="left:1306.5px;top:476.35px;color:#e6e6e6">Brushes</div>
<svg style="left:1470px;top:481px;" width="12" height="5" viewBox="0 0 12 5"><rect x="0.0" y="0.0" width="1.6" height="1.6" fill="#606060"/><rect x="3.0" y="0.0" width="1.6" height="1.6" fill="#606060"/><rect x="6.0" y="0.0" width="1.6" height="1.6" fill="#606060"/><rect x="9.0" y="0.0" width="1.6" height="1.6" fill="#606060"/><rect x="0.0" y="3.0" width="1.6" height="1.6" fill="#606060"/><rect x="3.0" y="3.0" width="1.6" height="1.6" fill="#606060"/><rect x="6.0" y="3.0" width="1.6" height="1.6" fill="#606060"/><rect x="9.0" y="3.0" width="1.6" height="1.6" fill="#606060"/></svg>
<div class="a" style="left:1293px;top:504.6px;width:157.3px;height:119.1px;background:#282828;border-radius:3.5px 3.5px 0 0"></div>
<svg style="left:1321px;top:513px;" width="101" height="101" viewBox="0 0 101 101">
      <defs><radialGradient id="sph" cx=".44" cy=".36" r=".66" fx=".4" fy=".3"><stop offset="0" stop-color="#747474"/><stop offset=".35" stop-color="#58595a"/><stop offset=".7" stop-color="#37383a"/><stop offset=".86" stop-color="#36383a"/><stop offset=".95" stop-color="#484c50"/><stop offset="1" stop-color="#565b60"/></radialGradient>
      <radialGradient id="sph2" cx=".5" cy=".5" r=".5"><stop offset="0" stop-color="#fff" stop-opacity=".32"/><stop offset="1" stop-color="#fff" stop-opacity="0"/></radialGradient>
      <radialGradient id="sph3" cx=".62" cy=".68" r=".4"><stop offset="0" stop-color="#262626" stop-opacity=".55"/><stop offset="1" stop-color="#262626" stop-opacity="0"/></radialGradient>
      <linearGradient id="sq" gradientUnits="userSpaceOnUse" x1="30" y1="20" x2="70" y2="75"><stop offset="0" stop-color="#dedede"/><stop offset=".5" stop-color="#c2c2c2"/><stop offset="1" stop-color="#a2a2a2"/></linearGradient>
      <filter id="sqb"><feGaussianBlur stdDeviation=".45"/></filter></defs>
      <circle cx="50.5" cy="50.3" r="49.8" fill="url(#sph)"/><circle cx="50.5" cy="50.3" r="49.8" fill="url(#sph3)"/>
      <circle cx="37" cy="14" r="13" fill="url(#sph2)"/>
      <g filter="url(#sqb)"><path d="M44.7 19.8 L29.1 52.8 L57.6 32.1 L43.4 65.8 L70.6 47.7 L62.8 74.8" fill="none" stroke="#2a2a2a" stroke-width="12.6" stroke-linecap="round" stroke-linejoin="round" opacity=".55" transform="translate(.6 .8)"/>
      <path d="M44.7 19.8 L29.1 52.8 L57.6 32.1 L43.4 65.8 L70.6 47.7 L62.8 74.8" fill="none" stroke="url(#sq)" stroke-width="10.5" stroke-linecap="round" stroke-linejoin="round"/></g></svg>
<div class="menu" style="left:1460.6px;top:504.6px;width:17.9px;height:17.6px;box-shadow:none;background:#282828"></div>
<svg style="left:1465.6px;top:511.79999999999995px;" width="8" height="4.0" viewBox="0 0 8 4.0"><path d="M0 0 L4.0 4.0 L8 0" fill="none" stroke="#e6e6e6" stroke-width="1.3" stroke-linecap="round" stroke-linejoin="round"/></svg>
<div class="menu pm" style="left:1460.6px;top:526.6px;width:17.9px;height:18.2px;"></div>
<svg style="left:1462.6px;top:528.6px;" width="14" height="14" viewBox="0 0 14 14"><path d="M1 3 V1 H13 V13 H11" fill="none" stroke="#e6e6e6" stroke-width="1.1"/><rect x=".8" y=".8" width="12.4" height="12.4" fill="none" stroke="#e6e6e6" stroke-width="1.2" opacity="0"/><path d="M1.2 13 L6 4.6 L10.8 13z" fill="#e6e6e6"/><circle cx="10.2" cy="4" r="1.2" fill="#e6e6e6"/></svg>
<div class="fld" style="left:1293px;top:623.6px;width:73.4px;height:19.0px;border-radius:3.5px 0 0 3.5px;box-shadow:none"></div>
<div class="t " style="left:1299.8px;top:626.05px;color:#e8e8e8">TexDraw</div>
<div class="btn" style="left:1366.9px;top:623.6px;width:23.5px;height:19.0px;border-radius:0"></div>
<div class="t " style="left:1278.7px;width:200px;text-align:center;top:626.05px;">2</div>
<div class="btn blue" style="left:1390.9px;top:623.6px;width:19.5px;height:19.0px;border-radius:0"></div>
<svg style="left:1393.6px;top:626px;" width="14" height="14" viewBox="0 0 14 14"><path d="M7 .8 C9 1.8 11 2.2 13 2.2 C13 7.6 11 11 7 13.4 C3 11 1 7.6 1 2.2 C3 2.2 5 1.8 7 .8z" fill="#fff"/><path d="M4 7 L6.2 9.4 L10.2 4.6" fill="none" stroke="#4772b3" stroke-width="1.6"/></svg>
<div class="btn" style="left:1410.9px;top:623.6px;width:19.4px;height:19.0px;border-radius:0"></div>
<svg style="left:1413.1999999999998px;top:626px;" width="14.8" height="13.9" viewBox="0 0 16 15"><path d="M4.9 1.2 H11.2 L15 5 V10.6 H4.9z" fill="none" stroke="#e6e6e6" stroke-width="1.2" stroke-linejoin="round"/>
      <path d="M11 1 L15.2 5.2 H11z" fill="#e6e6e6"/>
      <path d="M1.6 3.8 V14 H10.6" fill="none" stroke="#e6e6e6" stroke-width="1.2" stroke-linejoin="round"/></svg>
<div class="btn" style="left:1430.8px;top:623.6px;width:19.5px;height:19.0px;border-radius:0 3.5px 3.5px 0"></div>
<svg style="left:1436.8999999999999px;top:629.5px;" width="7.4" height="7.4" viewBox="0 0 7.4 7.4"><path d="M0 0 L7.4 7.4 M7.4 0 L0 7.4" stroke="#e6e6e6" stroke-width="1.2" stroke-linecap="round" fill="none"/></svg>
<div class="pnl" style="left:1284px;top:654px;width:204px;height:178px;border-radius:4px 4px 0 0"></div>
<div class="a" style="left:1284px;top:799.6px;width:204px;height:32.4px;background:#383838"></div>
<svg style="left:1291.8000000000002px;top:663.65px;" width="9.2" height="5.4" viewBox="0 0 9.2 5.4"><path d="M.5 .5 L4.6 4.7 L8.7 .5" fill="none" stroke="#d0d0d0" stroke-width="1.1" stroke-linecap="round" stroke-linejoin="round"/></svg><div class="t " style="left:1306.5px;top:659.05px;color:#e6e6e6">Brush Settings</div>
<svg style="left:1470px;top:663.8px;" width="12" height="5" viewBox="0 0 12 5"><rect x="0.0" y="0.0" width="1.6" height="1.6" fill="#606060"/><rect x="3.0" y="0.0" width="1.6" height="1.6" fill="#606060"/><rect x="6.0" y="0.0" width="1.6" height="1.6" fill="#606060"/><rect x="9.0" y="0.0" width="1.6" height="1.6" fill="#606060"/><rect x="0.0" y="3.0" width="1.6" height="1.6" fill="#606060"/><rect x="3.0" y="3.0" width="1.6" height="1.6" fill="#606060"/><rect x="6.0" y="3.0" width="1.6" height="1.6" fill="#606060"/><rect x="9.0" y="3.0" width="1.6" height="1.6" fill="#606060"/></svg>
<div class="t " style="right:190px;top:689.25px;">Blend</div>
<div class="menu pm" style="left:1372.6px;top:687.6px;width:105.9px;height:17.6px;"></div>
<div class="t " style="left:1379.8px;top:689.25px;">Mix</div>
<svg style="left:1469.3px;top:695.5px;" width="6" height="3.0" viewBox="0 0 6 3.0"><path d="M0 0 L3.0 3.0 L6 0" fill="none" stroke="#e0e0e0" stroke-width="1.2" stroke-linecap="round" stroke-linejoin="round"/></svg>
<div class="t " style="right:190px;top:719.4499999999999px;">Radius</div>
<div class="btn" style="left:1372.3px;top:717.5px;width:65.7px;height:18.2px;border-radius:4px 0 0 4px;overflow:hidden"><div class="a blue" style="left:0;top:0;width:3.2px;height:100%"></div></div>
<div class="t " style="left:1305.3px;width:200px;text-align:center;top:719.4499999999999px;">40 px</div>
<div class="btn" style="left:1438.6px;top:717.5px;width:19.9px;height:18.2px;border-radius:0"></div>
<svg style="left:1440.5px;top:718.5px;" width="16" height="16" viewBox="0 0 16 16"><path d="M5.47 7.96 A2.6 2.6 0 0 0 9.44 11.23 M3.93 7.03 A4.4 4.4 0 0 0 10.64 12.57 M2.39 6.11 A6.2 6.2 0 0 0 11.85 13.91" fill="none" stroke="#e6e6e6" stroke-width=".95" opacity=".9"/>
      <path d="M7 10.4 L7.7 7.4 L11.6 3.4 C12.5 2.5 13.8 2.5 14.6 3.3 C15.4 4.1 15.4 5.4 14.5 6.3 L10.6 10.2z" fill="#e6e6e6"/></svg>
<div class="btn blue" style="left:1459.1px;top:717.5px;width:19.4px;height:18.2px;border-radius:0 4px 4px 0"></div>
<svg style="left:1460.8px;top:718.5px;" width="16" height="16" viewBox="0 0 16 16"><path d="M1.2 1.4 H2.6 V2.6 H3.6 V1.4 H5 V2.6 H6 V1.4 H9.1 V3 H7.6 V5.6 H6.6 V7.4 H5.9 V14 H3.9 V7.4 H3.2 V5.6 H1.2z" fill="#f2f2f2"/>
      <rect x="13.1" y="1.4" width="1.8" height="7.9" fill="#f2f2f2"/><path d="M14.95 10.4 C15 12.6 13.4 14.4 9.8 14.4 C11.6 13.6 12.4 12.2 12.6 10.4z" fill="#f2f2f2"/></svg>
<div class="t " style="right:190px;top:741.4499999999999px;">Strength</div>
<div class="btn" style="left:1372.3px;top:739.5px;width:65.7px;height:18.2px;border-radius:4px 0 0 4px;overflow:hidden"><div class="a blue" style="left:0;top:0;width:27.5px;height:100%"></div></div>
<div class="t " style="left:1305.3px;width:200px;text-align:center;top:741.4499999999999px;">0.436</div>
<div class="btn blue" style="left:1438.6px;top:739.5px;width:19.9px;height:18.2px;border-radius:0"></div>
<svg style="left:1440.5px;top:740.5px;" width="16" height="16" viewBox="0 0 16 16"><path d="M5.47 7.96 A2.6 2.6 0 0 0 9.44 11.23 M3.93 7.03 A4.4 4.4 0 0 0 10.64 12.57 M2.39 6.11 A6.2 6.2 0 0 0 11.85 13.91" fill="none" stroke="#fff" stroke-width=".95" opacity=".9"/>
      <path d="M7 10.4 L7.7 7.4 L11.6 3.4 C12.5 2.5 13.8 2.5 14.6 3.3 C15.4 4.1 15.4 5.4 14.5 6.3 L10.6 10.2z" fill="#fff"/></svg>
<div class="btn" style="left:1459.1px;top:739.5px;width:19.4px;height:18.2px;border-radius:0 4px 4px 0"></div>
<svg style="left:1460.8px;top:740.5px;" width="16" height="16" viewBox="0 0 16 16"><path d="M1.2 1.4 H2.6 V2.6 H3.6 V1.4 H5 V2.6 H6 V1.4 H9.1 V3 H7.6 V5.6 H6.6 V7.4 H5.9 V14 H3.9 V7.4 H3.2 V5.6 H1.2z" fill="#f2f2f2"/>
      <rect x="13.1" y="1.4" width="1.8" height="7.9" fill="#f2f2f2"/><path d="M14.95 10.4 C15 12.6 13.4 14.4 9.8 14.4 C11.6 13.6 12.4 12.2 12.6 10.4z" fill="#f2f2f2"/></svg>
<svg style="left:1305.8000000000002px;top:784.65px;" width="9.2" height="5.4" viewBox="0 0 9.2 5.4"><path d="M.5 .5 L4.6 4.7 L8.7 .5" fill="none" stroke="#d0d0d0" stroke-width="1.1" stroke-linecap="round" stroke-linejoin="round"/></svg><div class="t " style="left:1320.3px;top:780.05px;color:#e6e6e6">Color Picker</div>
<div class="btn blue" style="left:1293px;top:808.2px;width:91.6px;height:18.6px;border-radius:3.5px 0 0 3.5px"></div>
<div class="t " style="left:1238.8px;width:200px;text-align:center;top:810.4499999999999px;color:#fff">Color</div>
<div class="btn" style="left:1385.4px;top:808.2px;width:93.1px;height:18.6px;border-radius:0 3.5px 3.5px 0"></div>
<div class="t " style="left:1332px;width:200px;text-align:center;top:810.4499999999999px;color:#ececec">Gradient</div>
</div></div>
</body></html>
